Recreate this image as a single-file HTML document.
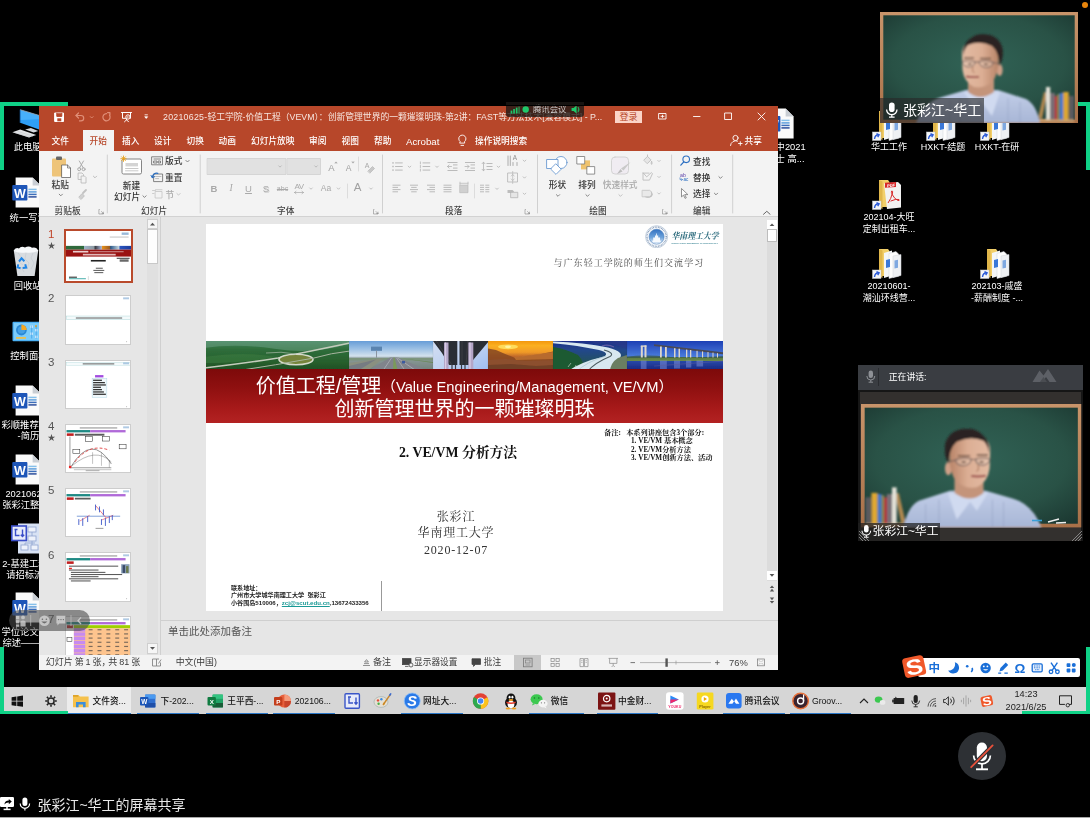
<!DOCTYPE html>
<html lang="zh-CN">
<head>
<meta charset="utf-8">
<title>腾讯会议 - 屏幕共享</title>
<style>
*{box-sizing:border-box;margin:0;padding:0}
html,body{width:1090px;height:818px;overflow:hidden;background:#000}
body{position:relative;font-family:"Liberation Sans","Noto Sans CJK SC",sans-serif;color:#fff;font-size:10px;line-height:1}
.a{position:absolute}
.g{position:absolute;background:#0fd186}
.blur{filter:blur(.45px)}
/* desktop icon labels */
.dl{position:absolute;color:#fff;font-size:9.5px;line-height:12px;white-space:nowrap;text-shadow:0 0 2px #000,1px 1px 1px #000}
.dlc{text-align:center;width:80px}
/* ppt */
#ppt{position:absolute;left:39px;top:105px;width:739px;height:565px;background:#e6e6e6;overflow:hidden}
#tb{position:absolute;left:0;top:0;width:739px;height:46px;background:#b7472a}
#rib{position:absolute;left:0;top:46px;width:739px;height:66px;background:#f3f3f3;border-bottom:1px solid #d2d2d2;color:#333}
.tab{position:absolute;top:29px;color:#fff;font-size:9.5px;white-space:nowrap;font-weight:500}
.rl{position:absolute;font-size:9px;color:#444;white-space:nowrap;font-weight:500}
.rg{position:absolute;top:101px;font-size:9px;color:#444;white-space:nowrap;transform:translateX(-50%)}
.sep{position:absolute;top:50px;width:1px;height:56px;background:#d5d5d5}
#thumbs{position:absolute;left:0;top:112px;width:121px;height:438px;background:#e6e6e6}
.th{position:absolute;left:27px;width:66px;height:50px;background:#fff;border:1px solid #cfcfcf;overflow:hidden}
.tn{position:absolute;left:9px;font-size:11px;color:#555}
#edit{position:absolute;left:122px;top:112px;width:617px;height:403px;background:#e6e6e6}
#slide{position:absolute;left:167px;top:119px;width:517px;height:387px;background:#fff;overflow:hidden;color:#000}
#notes{position:absolute;left:122px;top:515px;width:617px;height:35px;background:#e6e6e6;border-top:1px solid #cfcfcf}
#status{position:absolute;left:0;top:550px;width:739px;height:15px;background:#f3f3f3;color:#444;font-size:9.5px}
.st{position:absolute;top:2px;white-space:nowrap}
/* taskbar */
#task{position:absolute;left:0;top:687px;width:1090px;height:27px;background:#d6d6d6;color:#111}
.tk{position:absolute;top:0;height:27px}
.tkl{position:absolute;top:9.6px;font-size:8.7px;color:#111;white-space:nowrap;font-weight:500}
.ul{position:absolute;top:25.5px;height:1.5px;background:#2a76c6}
</style>
</head>
<body>

<!-- green share frame corners -->
<div class="g" style="left:0;top:102px;width:68px;height:4px"></div>
<div class="g" style="left:0;top:102px;width:3.7px;height:68px"></div>
<div class="g" style="left:1022px;top:102px;width:68px;height:4px"></div>
<div class="g" style="left:1086.3px;top:102px;width:3.7px;height:68px"></div>

<svg class="a blur" style="left:10px;top:107px" width="32" height="32" viewBox="0 0 32 32"><path d="M10.200 2.700 L32 9.300 V23.600 L10.200 15.800z" fill="#2e9ff6"/><path d="M10.200 2.700 L32 9.300 V12 L10.200 13z" fill="#5cbcff" opacity=".55"/><path d="M10.200 2.700 L32 9.300" stroke="#9aa4ae" stroke-width=".8"/><path d="M10.200 2.700 V15.800" stroke="#1a70c4" stroke-width=".8"/><path d="M15.200 22.600 L20.900 20.900 L28.300 23.900 L23.600 25.600z" fill="#d4d8dc"/><path d="M2.400 25.300 L10.200 22.600 L26.300 28 L18.900 30.600z" fill="#e2e4e6"/><path d="M4.800 25.500 L20 30 M7.600 24.400 L22.600 29" stroke="#c2c6ca" stroke-width=".6"/></svg>
<div class="dl blur" style="left:13.7px;top:142.3px;font-size:9.3px;line-height:11.500px">此电脑</div>
<svg class="a blur" style="left:11.5px;top:177px" width="30" height="31" viewBox="0 0 30 31"><path d="M3.6 0.4 h17 l8 8 v22 h-25z" fill="#fafafa"/><path d="M20.6 0.4 v8 h8z" fill="#c9ced4"/><path d="M16.4 12.400 h8.200" stroke="#86c0ea" stroke-width="1.500"/><path d="M16.400 14.900 h8.200" stroke="#5e9edc" stroke-width="1.500"/><path d="M16.400 17.400 h8.200" stroke="#3c6eba" stroke-width="1.500"/><path d="M16.400 19.900 h8.200" stroke="#2c4e9c" stroke-width="1.500"/><rect x="0.300" y="8.100" width="15.100" height="15.500" rx=".8" fill="#1e56b8"/><text x="7.900" y="20.600" font-family="Liberation Sans" font-weight="700" font-size="12.500" fill="#fff" text-anchor="middle">W</text></svg>
<div class="dl blur" style="left:9.6px;top:212.60000000000002px;font-size:9.3px;line-height:11.500px">统一写法</div>
<svg class="a blur" style="left:12px;top:245px" width="28" height="33" viewBox="0 0 28 33"><path d="M1.800 5.500 L26.200 5.500 L22.600 31 H5.400z" fill="#e4e8ec" opacity=".95"/><path d="M1.600 6 Q3 2 7 3.400 Q9 0.600 13 2.400 Q17 0.400 20 2.800 Q24.500 1.600 26.400 6 Q20 8.500 14 7.400 Q7 8.600 1.600 6z" fill="#f6f8fa"/><path d="M6 8 l3 4 l-2 5 l4 3 M14 8 l-1 6 l4 4 l-2 6 M21 8 l-2 5 l3 5 l-3 6 M9 22 l3 5" stroke="#c8ced6" stroke-width=".8" fill="none"/><g stroke="#1f86e8" stroke-width="2" fill="none"><path d="M7 16.500 l2.600 -3.200 l2.800 3"/><path d="M13.200 19.200 l1 3.400 l-3.600 .4"/><path d="M6.200 19.400 l-.6 3 l3 .8"/></g></svg>
<div class="dl blur" style="left:13.7px;top:281.1px;font-size:9.3px;line-height:11.500px">回收站</div>
<svg class="a blur" style="left:12px;top:321px" width="30" height="22" viewBox="0 0 30 22"><rect x="0.500" y="0.800" width="29" height="19.500" rx="1" fill="#4ab0f4"/><rect x="1.800" y="2" width="26.500" height="17" fill="#7cccfa"/><circle cx="9.400" cy="9" r="5.400" fill="#2a88d4"/><circle cx="9.400" cy="9" r="3.600" fill="#58b0ec" opacity=".6"/><path d="M9.400 9 V3.600 A5.400 5.400 0 0 1 14.800 9z" fill="#f6a820"/><rect x="4" y="16" width="10" height="1.800" fill="#e8c050"/><g fill="#eaf6ff"><rect x="18.500" y="4.500" width="2.400" height="2.400"/><rect x="23" y="8" width="2.400" height="2.400"/><rect x="18.500" y="11.500" width="2.400" height="2.400"/><rect x="23" y="14.600" width="2.400" height="2.400"/></g><rect x="23" y="4.200" width="2" height="2" fill="#f6a820"/><path d="M19.700 4.500 v13 M24.200 4.500 v13" stroke="#3a98e4" stroke-width=".7"/></svg>
<div class="dl blur" style="left:10.3px;top:350.7px;font-size:9.3px;line-height:11.500px">控制面板</div>
<svg class="a blur" style="left:11.5px;top:384.6px" width="30" height="31" viewBox="0 0 30 31"><path d="M3.6 0.4 h17 l8 8 v22 h-25z" fill="#fafafa"/><path d="M20.6 0.4 v8 h8z" fill="#c9ced4"/><path d="M16.4 12.400 h8.200" stroke="#86c0ea" stroke-width="1.500"/><path d="M16.400 14.900 h8.200" stroke="#5e9edc" stroke-width="1.500"/><path d="M16.400 17.400 h8.200" stroke="#3c6eba" stroke-width="1.500"/><path d="M16.400 19.900 h8.200" stroke="#2c4e9c" stroke-width="1.500"/><rect x="0.300" y="8.100" width="15.100" height="15.500" rx=".8" fill="#1e56b8"/><text x="7.900" y="20.600" font-family="Liberation Sans" font-weight="700" font-size="12.500" fill="#fff" text-anchor="middle">W</text></svg>
<div class="dl blur" style="left:1.5px;top:419.8px;font-size:9.3px;line-height:11.500px">彩顺推荐学</div>
<div class="dl blur" style="left:17.6px;top:431.0px;font-size:9.3px;line-height:11.500px">-简历</div>
<svg class="a blur" style="left:11.5px;top:454px" width="30" height="31" viewBox="0 0 30 31"><path d="M3.6 0.4 h17 l8 8 v22 h-25z" fill="#fafafa"/><path d="M20.6 0.4 v8 h8z" fill="#c9ced4"/><path d="M16.4 12.400 h8.200" stroke="#86c0ea" stroke-width="1.500"/><path d="M16.400 14.900 h8.200" stroke="#5e9edc" stroke-width="1.500"/><path d="M16.400 17.400 h8.200" stroke="#3c6eba" stroke-width="1.500"/><path d="M16.400 19.900 h8.200" stroke="#2c4e9c" stroke-width="1.500"/><rect x="0.300" y="8.100" width="15.100" height="15.500" rx=".8" fill="#1e56b8"/><text x="7.900" y="20.600" font-family="Liberation Sans" font-weight="700" font-size="12.500" fill="#fff" text-anchor="middle">W</text></svg>
<div class="dl blur" style="left:5.4px;top:488.7px;font-size:9.3px;line-height:11.500px">2021062</div>
<div class="dl blur" style="left:2.2px;top:499.9px;font-size:9.3px;line-height:11.500px">张彩江整理</div>
<svg class="a blur" style="left:11px;top:523px" width="30" height="32" viewBox="0 0 30 32"><rect x="7" y="0.500" width="22" height="30" fill="#d8e2f4"/><g stroke="#8fa4d0" stroke-width=".8" fill="#eef2fb"><rect x="17" y="4" width="8" height="5"/><rect x="17" y="13" width="8" height="5"/><rect x="10" y="22" width="7" height="5"/><rect x="20" y="22" width="7" height="5"/><path d="M21 9 v4 M21 18 v4 M14 22 v-2 h10" fill="none"/></g><rect x="0.800" y="3" width="14.500" height="14.500" fill="#e8ecfb" stroke="#3a4ec8" stroke-width="1.600"/><path d="M4.500 6.500 v6 h4 M11.500 6.500 v7 M9.800 11.800 l1.700 1.800 l1.700 -1.800 M3.500 6.500 h3" stroke="#3a4ec8" stroke-width="1.400" fill="none"/></svg>
<div class="dl blur" style="left:2.2px;top:558.9px;font-size:9.3px;line-height:11.500px">2-基建工程</div>
<div class="dl blur" style="left:6.2px;top:570.1px;font-size:9.3px;line-height:11.500px">请招标流</div>
<svg class="a blur" style="left:11.5px;top:592.4px" width="30" height="31" viewBox="0 0 30 31"><path d="M3.6 0.4 h17 l8 8 v22 h-25z" fill="#fafafa"/><path d="M20.6 0.4 v8 h8z" fill="#c9ced4"/><path d="M16.4 12.400 h8.200" stroke="#86c0ea" stroke-width="1.500"/><path d="M16.400 14.900 h8.200" stroke="#5e9edc" stroke-width="1.500"/><path d="M16.400 17.400 h8.200" stroke="#3c6eba" stroke-width="1.500"/><path d="M16.400 19.900 h8.200" stroke="#2c4e9c" stroke-width="1.500"/><rect x="0.300" y="8.100" width="15.100" height="15.500" rx=".8" fill="#1e56b8"/><text x="7.900" y="20.600" font-family="Liberation Sans" font-weight="700" font-size="12.500" fill="#fff" text-anchor="middle">W</text></svg>
<div class="dl blur" style="left:1.5px;top:627.0px;font-size:9.3px;line-height:11.500px">学位论文文</div>
<div class="dl blur" style="left:2.4px;top:638.2px;font-size:9.3px;line-height:11.500px">综述——</div>

<svg class="a blur" style="left:764.7px;top:107.5px" width="30" height="31" viewBox="0 0 30 31"><path d="M3.6 0.4 h17 l8 8 v22 h-25z" fill="#fafafa"/><path d="M20.6 0.4 v8 h8z" fill="#c9ced4"/><path d="M16.4 12.400 h8.200" stroke="#86c0ea" stroke-width="1.500"/><path d="M16.400 14.900 h8.200" stroke="#5e9edc" stroke-width="1.500"/><path d="M16.400 17.400 h8.200" stroke="#3c6eba" stroke-width="1.500"/><path d="M16.400 19.900 h8.200" stroke="#2c4e9c" stroke-width="1.500"/><rect x="0.300" y="8.100" width="15.100" height="15.500" rx=".8" fill="#1e56b8"/><text x="7.900" y="20.600" font-family="Liberation Sans" font-weight="700" font-size="12.500" fill="#fff" text-anchor="middle">W</text></svg>
<div class="dl blur" style="left:775.6px;top:141.9px;font-size:9.3px;line-height:11.500px">中2021</div>
<div class="dl blur" style="left:775.6px;top:154.20000000000002px;font-size:9.3px;line-height:11.500px">士 高...</div>
<svg class="a blur" style="left:872px;top:110px" width="30" height="32" viewBox="0 0 30 32"><path d="M7 1 h9 l1.500 2 v25 h-10.500z" fill="#f2cf6a"/><path d="M7 1 l3.500 1.500 v27.500 l-3.500 -2z" fill="#e0b64a"/><path d="M12 5 l8 -2.500 v25 l-8 2.500z" fill="#f4f6f8"/><path d="M17 5.500 l7 -2 l3 3 v21.500 l-10 2.500z" fill="#fdfdfd" stroke="#d0d4d8" stroke-width=".5"/><path d="M21 8 l8 -1.500 v21 l-8 2z" fill="#eef0f3" stroke="#d0d4d8" stroke-width=".5"/><path d="M14 12 l4 -1 v8 l-4 1z" fill="#3a78d8"/><path d="M22.500 12.500 l3.500 -.8 v8 l-3.500 .8z" fill="#7fa8e0"/><rect x="0.500" y="22" width="8.500" height="8.500" fill="#f4f6f8" stroke="#c8ccd0" stroke-width=".5"/><path d="M2.500 29 q.5 -4 4 -4.200 M4.500 23.600 l2.600 1.200 l-1.400 2.400" stroke="#2a5ad8" stroke-width="1.400" fill="none"/></svg>
<div class="dl dlc blur" style="left:844.0px;top:142.3px;width:90px;font-size:9px;line-height:11.500px">华工工作</div>
<svg class="a blur" style="left:926px;top:110px" width="30" height="32" viewBox="0 0 30 32"><path d="M7 1 h9 l1.500 2 v25 h-10.500z" fill="#f2cf6a"/><path d="M7 1 l3.500 1.500 v27.500 l-3.500 -2z" fill="#e0b64a"/><path d="M12 5 l8 -2.500 v25 l-8 2.500z" fill="#f4f6f8"/><path d="M17 5.500 l7 -2 l3 3 v21.500 l-10 2.500z" fill="#fdfdfd" stroke="#d0d4d8" stroke-width=".5"/><path d="M21 8 l8 -1.500 v21 l-8 2z" fill="#eef0f3" stroke="#d0d4d8" stroke-width=".5"/><path d="M14 12 l4 -1 v8 l-4 1z" fill="#3a78d8"/><path d="M22.500 12.500 l3.500 -.8 v8 l-3.500 .8z" fill="#7fa8e0"/><rect x="0.500" y="22" width="8.500" height="8.500" fill="#f4f6f8" stroke="#c8ccd0" stroke-width=".5"/><path d="M2.500 29 q.5 -4 4 -4.200 M4.500 23.600 l2.600 1.200 l-1.400 2.400" stroke="#2a5ad8" stroke-width="1.400" fill="none"/></svg>
<div class="dl dlc blur" style="left:898.0px;top:142.3px;width:90px;font-size:9px;line-height:11.500px">HXKT-结题</div>
<svg class="a blur" style="left:980px;top:110px" width="30" height="32" viewBox="0 0 30 32"><path d="M7 1 h9 l1.500 2 v25 h-10.500z" fill="#f2cf6a"/><path d="M7 1 l3.500 1.500 v27.500 l-3.500 -2z" fill="#e0b64a"/><path d="M12 5 l8 -2.500 v25 l-8 2.500z" fill="#f4f6f8"/><path d="M17 5.500 l7 -2 l3 3 v21.500 l-10 2.500z" fill="#fdfdfd" stroke="#d0d4d8" stroke-width=".5"/><path d="M21 8 l8 -1.500 v21 l-8 2z" fill="#eef0f3" stroke="#d0d4d8" stroke-width=".5"/><path d="M14 12 l4 -1 v8 l-4 1z" fill="#3a78d8"/><path d="M22.500 12.500 l3.500 -.8 v8 l-3.500 .8z" fill="#7fa8e0"/><rect x="0.500" y="22" width="8.500" height="8.500" fill="#f4f6f8" stroke="#c8ccd0" stroke-width=".5"/><path d="M2.500 29 q.5 -4 4 -4.200 M4.500 23.600 l2.600 1.200 l-1.400 2.400" stroke="#2a5ad8" stroke-width="1.400" fill="none"/></svg>
<div class="dl dlc blur" style="left:952.0px;top:142.3px;width:90px;font-size:9px;line-height:11.500px">HXKT-在研</div>
<svg class="a blur" style="left:872px;top:178.5px" width="30" height="32" viewBox="0 0 30 32"><path d="M7 1 h9 l1.500 2 v25 h-10.500z" fill="#f2cf6a"/><path d="M7 1 l3.500 1.500 v27.500 l-3.500 -2z" fill="#e0b64a"/><path d="M12 4.500 l14 -1.500 l3 3 v22.500 l-14 1.500z" fill="#f2f2f2"/><rect x="13" y="5" width="11" height="5" fill="#d8282a" transform="skewY(-5)"/><text x="15" y="9.500" font-family="Liberation Sans" font-weight="700" font-size="4" fill="#fff" transform="skewY(-5)">PDF</text><path d="M16 24 q3 -4 4.500 -10 q.6 -2.400 -.8 -2 q-1 .8 .8 4 q2 4 5.500 5.500 q1.800 .3 1 -1 q-2.400 -1 -8.500 1.600" stroke="#d8282a" stroke-width="1" fill="none"/><rect x="0.500" y="22" width="8.500" height="8.500" fill="#f4f6f8" stroke="#c8ccd0" stroke-width=".5"/><path d="M2.500 29 q.5 -4 4 -4.200 M4.500 23.600 l2.600 1.200 l-1.400 2.400" stroke="#2a5ad8" stroke-width="1.400" fill="none"/></svg>
<div class="dl dlc blur" style="left:844.0px;top:212.3px;width:90px;font-size:9px;line-height:11.500px">202104-大旺<br>定制出租车...</div>
<svg class="a blur" style="left:872px;top:247.5px" width="30" height="32" viewBox="0 0 30 32"><path d="M7 1 h9 l1.500 2 v25 h-10.500z" fill="#f2cf6a"/><path d="M7 1 l3.500 1.500 v27.500 l-3.500 -2z" fill="#e0b64a"/><path d="M12 5 l8 -2.500 v25 l-8 2.500z" fill="#f4f6f8"/><path d="M17 5.500 l7 -2 l3 3 v21.500 l-10 2.500z" fill="#fdfdfd" stroke="#d0d4d8" stroke-width=".5"/><path d="M21 8 l8 -1.500 v21 l-8 2z" fill="#eef0f3" stroke="#d0d4d8" stroke-width=".5"/><path d="M14 12 l4 -1 v8 l-4 1z" fill="#3a78d8"/><path d="M22.500 12.500 l3.500 -.8 v8 l-3.500 .8z" fill="#7fa8e0"/><rect x="0.500" y="22" width="8.500" height="8.500" fill="#f4f6f8" stroke="#c8ccd0" stroke-width=".5"/><path d="M2.500 29 q.5 -4 4 -4.200 M4.500 23.600 l2.600 1.200 l-1.400 2.400" stroke="#2a5ad8" stroke-width="1.400" fill="none"/></svg>
<div class="dl dlc blur" style="left:844.0px;top:281.2px;width:90px;font-size:9px;line-height:11.500px">20210601-<br>潮汕环线营...</div>
<svg class="a blur" style="left:980px;top:247.5px" width="30" height="32" viewBox="0 0 30 32"><path d="M7 1 h9 l1.500 2 v25 h-10.500z" fill="#f2cf6a"/><path d="M7 1 l3.500 1.500 v27.500 l-3.500 -2z" fill="#e0b64a"/><path d="M12 5 l8 -2.500 v25 l-8 2.500z" fill="#f4f6f8"/><path d="M17 5.500 l7 -2 l3 3 v21.500 l-10 2.500z" fill="#fdfdfd" stroke="#d0d4d8" stroke-width=".5"/><path d="M21 8 l8 -1.500 v21 l-8 2z" fill="#eef0f3" stroke="#d0d4d8" stroke-width=".5"/><path d="M14 12 l4 -1 v8 l-4 1z" fill="#3a78d8"/><path d="M22.500 12.500 l3.500 -.8 v8 l-3.500 .8z" fill="#7fa8e0"/><rect x="0.500" y="22" width="8.500" height="8.500" fill="#f4f6f8" stroke="#c8ccd0" stroke-width=".5"/><path d="M2.500 29 q.5 -4 4 -4.200 M4.500 23.600 l2.600 1.200 l-1.400 2.400" stroke="#2a5ad8" stroke-width="1.400" fill="none"/></svg>
<div class="dl dlc blur" style="left:952.0px;top:281.2px;width:90px;font-size:9px;line-height:11.500px">202103-戚盛<br>-薪酬制度 -...</div>


<!-- PowerPoint window -->
<div id="ppt">
  <div id="tb"></div>
  <div id="rib"></div>
  <div class="a" style="left:0;top:0;width:739px;height:113px">
<div class="a blur" style="left:124px;top:7.4px;font-size:8.8px;line-height:11px;color:#f7e6e0;white-space:nowrap;width:440px;overflow:hidden"><span style="letter-spacing:.26px">20210625-</span>轻工学院-价值工程（VEVM）：创新管理世界的一颗璀璨明珠-第2讲：FAST等方法技术[兼容模式] - P...</div>
<div class="a" style="left:576px;top:5.5px;width:27px;height:12.5px;background:#fbd5c8;color:#b7472a;font-size:9px;line-height:12.5px;text-align:center">登录</div>
<div class="a" style="left:43.5px;top:25px;width:31px;height:21px;background:#f3f3f3"></div>
<div class="tab blur" style="left:12.6px;top:30.5px;color:#fff;font-size:8.7px;line-height:11px">文件</div>
<div class="tab blur" style="left:50.5px;top:30.5px;color:#b7472a;font-size:8.7px;line-height:11px">开始</div>
<div class="tab blur" style="left:83px;top:30.5px;color:#fff;font-size:8.7px;line-height:11px">插入</div>
<div class="tab blur" style="left:115px;top:30.5px;color:#fff;font-size:8.7px;line-height:11px">设计</div>
<div class="tab blur" style="left:147.5px;top:30.5px;color:#fff;font-size:8.7px;line-height:11px">切换</div>
<div class="tab blur" style="left:179.6px;top:30.5px;color:#fff;font-size:8.7px;line-height:11px">动画</div>
<div class="tab blur" style="left:212px;top:30.5px;color:#fff;font-size:8.7px;line-height:11px">幻灯片放映</div>
<div class="tab blur" style="left:270px;top:30.5px;color:#fff;font-size:8.7px;line-height:11px">审阅</div>
<div class="tab blur" style="left:302.5px;top:30.5px;color:#fff;font-size:8.7px;line-height:11px">视图</div>
<div class="tab blur" style="left:335px;top:30.5px;color:#fff;font-size:8.7px;line-height:11px">帮助</div>
<div class="tab blur" style="left:367px;top:30.5px;color:#fff;font-size:9.7px;line-height:11px">Acrobat</div>
<div class="tab blur" style="left:436px;top:30.5px;color:#fff;font-size:8.7px;line-height:11px">操作说明搜索</div>
<div class="tab blur" style="left:705.6px;top:30.5px;color:#fff;font-size:8.7px;line-height:11px">共享</div>
<div class="rl blur" style="left:12.6px;top:75.0px;color:#333;font-size:8.7px;line-height:11px;">粘贴</div>
<div class="rl blur" style="left:83.7px;top:76.1px;color:#333;font-size:8.7px;line-height:11px;">新建</div>
<div class="rl blur" style="left:75px;top:86.89999999999999px;color:#333;font-size:8.7px;line-height:11px;">幻灯片</div>
<div class="rl blur" style="left:126px;top:51.4px;color:#333;font-size:8.7px;line-height:11px;">版式</div>
<div class="rl blur" style="left:126px;top:68.1px;color:#333;font-size:8.7px;line-height:11px;">重置</div>
<div class="rl blur" style="left:126.5px;top:84.6px;color:#aaa;font-size:8.7px;line-height:11px;">节</div>
<div class="rl blur" style="left:15.6px;top:101.39999999999999px;color:#444;font-size:8.7px;line-height:11px;">剪贴板</div>
<div class="rl blur" style="left:102px;top:101.39999999999999px;color:#444;font-size:8.7px;line-height:11px;">幻灯片</div>
<div class="rl blur" style="left:238px;top:101.39999999999999px;color:#444;font-size:8.7px;line-height:11px;">字体</div>
<div class="rl blur" style="left:406.0px;top:101.39999999999999px;color:#444;font-size:8.7px;line-height:11px;">段落</div>
<div class="rl blur" style="left:550.3px;top:101.1px;color:#444;font-size:8.7px;line-height:11px;">绘图</div>
<div class="rl blur" style="left:654px;top:101.1px;color:#444;font-size:8.7px;line-height:11px;">编辑</div>
<div class="rl blur" style="left:509.7px;top:75.3px;color:#333;font-size:8.7px;line-height:11px;">形状</div>
<div class="rl blur" style="left:539.2px;top:75.3px;color:#333;font-size:8.7px;line-height:11px;">排列</div>
<div class="rl blur" style="left:563.8px;top:75.3px;color:#aaa;font-size:8.7px;line-height:11px;">快速样式</div>
<div class="rl blur" style="left:654px;top:51.6px;color:#333;font-size:8.7px;line-height:11px;">查找</div>
<div class="rl blur" style="left:654px;top:67.6px;color:#333;font-size:8.7px;line-height:11px;">替换</div>
<div class="rl blur" style="left:654px;top:84.0px;color:#333;font-size:8.7px;line-height:11px;">选择</div>
<div class="rl blur" style="left:165px;width:20px;text-align:center;top:77.8px;color:#a9a9a9;font-size:9.5px;line-height:11px;font-weight:700;font-style:normal;">B</div>
<div class="rl blur" style="left:182px;width:20px;text-align:center;top:77.8px;color:#a9a9a9;font-size:9.5px;line-height:11px;font-weight:400;font-style:italic;font-family:'Liberation Serif',serif;">I</div>
<div class="rl blur" style="left:199.5px;width:20px;text-align:center;top:77.8px;color:#a9a9a9;font-size:9.5px;line-height:11px;font-weight:400;font-style:normal;text-decoration:underline;">U</div>
<div class="rl blur" style="left:217px;width:20px;text-align:center;top:77.8px;color:#a9a9a9;font-size:9.5px;line-height:11px;font-weight:400;font-style:normal;text-shadow:.6px .6px 0 #ccc;">S</div>
<div class="rl blur" style="left:233.5px;width:20px;text-align:center;top:77.8px;color:#a9a9a9;font-size:9.5px;line-height:11px;font-weight:400;font-style:normal;text-decoration:line-through;font-size:7px;">abc</div>
<div class="rl blur" style="left:277px;width:20px;text-align:center;top:77.8px;color:#a9a9a9;font-size:9.5px;line-height:11px;font-weight:400;font-style:normal;font-size:8.5px;">Aa</div>
<div class="rl blur" style="left:250px;width:20px;text-align:center;top:76.0px;color:#a9a9a9;font-size:8px;line-height:11px;letter-spacing:-.5px">AV</div>
<div class="rl blur" style="left:308.5px;width:20px;text-align:center;top:75.5px;color:#a0a0a0;font-size:11.5px;line-height:12px">A</div>
<div class="rl blur" style="left:282.5px;width:20px;text-align:center;top:57.0px;color:#a0a0a0;font-size:9.5px;line-height:11px">A</div>
<div class="rl blur" style="left:299.5px;width:20px;text-align:center;top:57.5px;color:#a0a0a0;font-size:8.5px;line-height:11px">A</div>
<svg class="a blur" style="left:0;top:0" width="739" height="113" viewBox="0 0 739 113" fill="none" stroke-linecap="round" stroke-linejoin="round">
<g stroke="#fff" stroke-width="1"><path d="M16 8 h8.5 v8.5 h-8.5z" fill="#fff"/><path d="M17.8 8.2 v3.2 h5 v-3.2" stroke="#b7472a" fill="#b7472a"/><rect x="18.3" y="13.3" width="4" height="3" fill="#b7472a" stroke="none"/></g>
<g stroke="#e08f78" stroke-width="1.2"><path d="M37 10.5 h5 a2.7 2.7 0 0 1 0 5.4 h-1.5"/><path d="M39.5 8 L37 10.5 L39.5 13"/></g>
<path d="M51.3 11.6 l1.4 1.4 l1.4 -1.4" stroke="#e08f78" stroke-width=".9"/>
<g stroke="#e08f78" stroke-width="1.2"><path d="M70.5 10.2 a3.6 3.6 0 1 1 -3 -1.6"/><path d="M68.6 7.6 h2.3 v2.3"/></g>
<g stroke="#fff" stroke-width="1"><path d="M82.5 7.5 h10"/><path d="M83.5 7.5 v5.8 h8 v-5.8"/><path d="M87.5 13.3 v1.5 M85.5 16.8 l2 -2 l2 2"/><circle cx="89" cy="12" r="2.2" fill="#b7472a"/><path d="M88.4 11 l1.6 1 l-1.6 1z" fill="#fff" stroke="none"/></g>
<path d="M106 9.8 h2.4 M106 12 l1.2 1.4 l1.2 -1.4z" stroke="#fff" stroke-width=".8" fill="#fff"/>
<g stroke="#fff" stroke-width=".9"><rect x="620" y="8.5" width="7" height="5.5"/><path d="M622 11.3 h3 M623.5 10.2 v2.2" /><path d="M654.5 11.5 h6.5"/><rect x="686" y="8" width="6.5" height="6.5"/><path d="M719 8 l7 7 M726 8 l-7 7"/></g>
<g stroke="#fff" stroke-width=".9"><path d="M421 36.5 a3.6 3.6 0 1 1 4.6 0 v1.6 h-4.6z"/><path d="M422 40.4 h2.6"/></g>
<g stroke="#fff" stroke-width=".9"><circle cx="696.5" cy="33" r="2.6"/><path d="M691.5 40.5 a5 5 0 0 1 7 -4.4"/><path d="M699.5 38.5 h3.6 M701.3 36.7 v3.6"/></g>
<path d="M68.3 50 V108" stroke="#d0d0d0" stroke-width="1"/>
<path d="M161.2 50 V108" stroke="#d0d0d0" stroke-width="1"/>
<path d="M343.5 50 V108" stroke="#d0d0d0" stroke-width="1"/>
<path d="M498.5 50 V108" stroke="#d0d0d0" stroke-width="1"/>
<path d="M632.6 50 V108" stroke="#d0d0d0" stroke-width="1"/>
<path d="M693.7 50 V108" stroke="#d0d0d0" stroke-width="1"/>
<path d="M60.4 104.5 h-0.5 v4.5 h4.5 v-0.5 M62.4 106.5 l2 2 M64.4 107.1 v1.4 h-1.4" stroke="#8a8a8a" stroke-width=".6"/>
<path d="M335 104.5 h-0.5 v4.5 h4.5 v-0.5 M337 106.5 l2 2 M339 107.1 v1.4 h-1.4" stroke="#8a8a8a" stroke-width=".6"/>
<path d="M486.5 104.5 h-0.5 v4.5 h4.5 v-0.5 M488.5 106.5 l2 2 M490.5 107.1 v1.4 h-1.4" stroke="#8a8a8a" stroke-width=".6"/>
<path d="M624 104.5 h-0.5 v4.5 h4.5 v-0.5 M626 106.5 l2 2 M628 107.1 v1.4 h-1.4" stroke="#8a8a8a" stroke-width=".6"/>
<path d="M724.5 109.3 l3.3 -3 l3.3 3" stroke="#555" stroke-width=".9"/>
<g><rect x="13" y="53.5" width="14" height="18" rx="1" fill="#eec479"/><rect x="17" y="51.6" width="6" height="3.4" rx="1" fill="#666"/><path d="M23 60 h5.5 l3 3 v9.5 h-8.5z" fill="#fff" stroke="#666" stroke-width=".8"/><path d="M28.5 60 v3 h3" stroke="#666" stroke-width=".7"/></g>
<path d="M20.2 89.2 L21.8 90.8 L23.400000000000002 89.2" stroke="#777" stroke-width="0.9"/>
<g stroke="#a5a5a5" stroke-width=".9"><path d="M40.3 56 l4 7 M44.5 56 l-4 7"/><circle cx="40.2" cy="64.2" r="1.5"/><circle cx="44.6" cy="64.2" r="1.5"/></g>
<g stroke="#b5b5b5" stroke-width=".8"><path d="M39.5 68 h3.5 l1.5 1.5 v5 h-5z"/><path d="M42.5 71 h3 l1.5 1.5 v5.5 h-4.5z" fill="#f3f3f3"/></g>
<path d="M54.4 71.2 L56 72.8 L57.6 71.2" stroke="#b5b5b5" stroke-width="0.9"/>
<g stroke="#c2c2c2" stroke-width="1"><path d="M40 92 l3 -3.4 l2.4 2.2 l-3 3.4z" fill="#d0d0d0"/><path d="M44 88 l3 -3" stroke-width="1.8"/></g>
<g><rect x="83" y="54" width="19.5" height="15" rx="1.5" fill="#fff" stroke="#777" stroke-width=".9"/><rect x="86.5" y="58" width="12.5" height="3.4" fill="#d4d4d4"/><path d="M86.5 63.5 h12.5 M86.5 65.8 h12.5" stroke="#bbb" stroke-width=".8"/><g stroke="#e8a11c" stroke-width=".9"><path d="M84.5 51 v5.4 M81.8 53.7 h5.4 M82.6 51.8 l3.8 3.8 M86.4 51.8 l-3.8 3.8"/></g></g>
<path d="M103.9 90.8 L105.5 92.39999999999999 L107.1 90.8" stroke="#777" stroke-width="0.9"/>
<g stroke="#666" stroke-width=".8"><rect x="113" y="51.8" width="10.5" height="8"/><path d="M115 54 h6.5 M115 56 h3 v2 h-3z M119.5 56 h2 v2 h-2z"/></g>
<path d="M146.9 55.400000000000006 L148.5 57.0 L150.1 55.400000000000006" stroke="#777" stroke-width="0.9"/>
<g stroke="#666" stroke-width=".8"><rect x="115" y="69" width="8.600" height="7.600" fill="#f3f3f3"/><path d="M116.600 71.500 h5.400 M116.600 73.600 h3" stroke="#999" stroke-width=".6"/></g><path d="M113.400 72.400 a4.200 4.200 0 0 1 5.400 -4" stroke="#2b6fc2" stroke-width="1.300" fill="none"/><path d="M112 70.400 l1.300 2.400 l2.400 -1.200" stroke="#2b6fc2" stroke-width="1" fill="none"/>
<g stroke="#c4c4c4" stroke-width=".8"><path d="M113.5 85.5 h3 M113.5 88.5 h1.5"/><rect x="116.5" y="86.5" width="6.5" height="6.5"/><path d="M116.5 84.7 h6.5"/></g>
<path d="M137.9 88.5 L139.5 90.1 L141.1 88.5" stroke="#c0c0c0" stroke-width="0.9"/>
<rect x="168.5" y="53.5" width="78.5" height="16" fill="#e1e1e1" stroke="#cfcfcf" stroke-width=".8"/>
<rect x="248.5" y="53.5" width="33" height="16" fill="#e1e1e1" stroke="#cfcfcf" stroke-width=".8"/>
<path d="M239.7 60.85 L241 62.15 L242.3 60.85" stroke="#b0b0b0" stroke-width="0.8"/>
<path d="M275.7 60.85 L277 62.15 L278.3 60.85" stroke="#b0b0b0" stroke-width="0.8"/>
<path d="M296 58 l1 -1.2 l1 1.2z M313 57 l1 1.2 l1 -1.2z" fill="#a0a0a0" stroke="#a0a0a0" stroke-width=".4"/>
<path d="M319.5 52 v14" stroke="#d6d6d6" stroke-width=".8"/>
<text x="328" y="62.5" font-family="Liberation Sans" font-size="7" fill="#a8a8a8" text-anchor="middle">A</text><g stroke="#b0b0b0"><path d="M329 66 l4.5 -4.5 l2 2 l-4.5 4.5z" fill="#c8c8c8" stroke-width=".6"/></g>
<path d="M255.5 87.5 h9 M257 86.3 l-1.5 1.2 l1.5 1.2 M263 86.3 l1.5 1.2 l-1.5 1.2" stroke="#a9a9a9" stroke-width=".7"/>
<path d="M270.7 82.94999999999999 L272 84.25 L273.3 82.94999999999999" stroke="#b5b5b5" stroke-width="0.8"/>
<path d="M298.2 82.94999999999999 L299.5 84.25 L300.8 82.94999999999999" stroke="#b5b5b5" stroke-width="0.8"/>
<path d="M330.7 82.94999999999999 L332 84.25 L333.3 82.94999999999999" stroke="#b5b5b5" stroke-width="0.8"/>
<path d="M308.5 79 v14" stroke="#d6d6d6" stroke-width=".8"/>
<rect x="353.3" y="57.199999999999996" width="1.4" height="1.4" fill="#b4b4b4"/>
<path d="M356.1 57.9 h7.6" stroke="#b4b4b4" stroke-width=".9" stroke-linecap="butt"/>
<rect x="353.3" y="60.8" width="1.4" height="1.4" fill="#b4b4b4"/>
<path d="M356.1 61.5 h7.6" stroke="#b4b4b4" stroke-width=".9" stroke-linecap="butt"/>
<rect x="353.3" y="64.39999999999999" width="1.4" height="1.4" fill="#b4b4b4"/>
<path d="M356.1 65.1 h7.6" stroke="#b4b4b4" stroke-width=".9" stroke-linecap="butt"/>
<path d="M369.2 61.15 L370.5 62.449999999999996 L371.8 61.15" stroke="#b4b4b4" stroke-width="0.8"/>
<path d="M381.4 56.9 v2" stroke="#b4b4b4" stroke-width=".8"/>
<path d="M383.6 57.9 h7.6" stroke="#b4b4b4" stroke-width=".9" stroke-linecap="butt"/>
<path d="M381.4 60.5 v2" stroke="#b4b4b4" stroke-width=".8"/>
<path d="M383.6 61.5 h7.6" stroke="#b4b4b4" stroke-width=".9" stroke-linecap="butt"/>
<path d="M381.4 64.1 v2" stroke="#b4b4b4" stroke-width=".8"/>
<path d="M383.6 65.1 h7.6" stroke="#b4b4b4" stroke-width=".9" stroke-linecap="butt"/>
<path d="M396.7 61.15 L398 62.449999999999996 L399.3 61.15" stroke="#b4b4b4" stroke-width="0.8"/>
<path d="M408.5 57.5 h10 M408.5 65.5 h10 M414.0 59.9 h4.5 M414.0 63.1 h4.5" stroke="#b4b4b4" stroke-width=".9" stroke-linecap="butt"/>
<path d="M412.5 61.5 h-4 M410.1 59.9 l-1.6 1.6 l1.6 1.6" stroke="#b4b4b4" stroke-width=".8"/>
<path d="M426 57.5 h10 M426 65.5 h10 M431.5 59.9 h4.5 M431.5 63.1 h4.5" stroke="#b4b4b4" stroke-width=".9" stroke-linecap="butt"/>
<path d="M426 61.5 h4 M428.4 59.9 l1.6 1.6 l-1.6 1.6" stroke="#b4b4b4" stroke-width=".8"/>
<path d="M444.5 57.3 v8.4 M443.1 58.7 l1.4 -1.6 l1.4 1.6 M443.1 64.3 l1.4 1.6 l1.4 -1.6" stroke="#b4b4b4" stroke-width=".8"/><path d="M447.5 58.5 h6 M447.5 61.5 h6 M447.5 64.5 h6" stroke="#b4b4b4" stroke-width=".9" stroke-linecap="butt"/>
<path d="M458.2 61.15 L459.5 62.449999999999996 L460.8 61.15" stroke="#b4b4b4" stroke-width="0.8"/>
<path d="M469.0 51.0 v9.5 M471.3 51.0 v9.5 M474.0 60.5 v-3 M478.0 60.5 v-3" stroke="#9a9a9a" stroke-width=".8"/><text x="476.0" y="55.3" font-family="Liberation Sans" font-size="6.400" fill="#8e8e8e" text-anchor="middle">A</text>
<path d="M484.2 55.15 L485.5 56.449999999999996 L486.8 55.15" stroke="#b4b4b4" stroke-width="0.8"/>
<rect x="469.0" y="68.0" width="9.5" height="9" stroke="#b4b4b4" stroke-width=".8"/><path d="M473.7 66.5 v12 M472.3 71.0 l1.4 -1.6 l1.4 1.6 M472.3 74.0 l1.4 1.6 l1.4 -1.6" stroke="#b4b4b4" stroke-width=".7"/>
<path d="M484.2 71.85 L485.5 73.15 L486.8 71.85" stroke="#b4b4b4" stroke-width="0.8"/>
<path d="M468.5 84.9 h5 l1.6 1.6 l-1.6 1.6 h-5z" fill="#bdbdbd" stroke="none"/><rect x="472.0" y="87.3" width="6.8" height="5.4" fill="#e6e6e6" stroke="#b4b4b4" stroke-width=".8"/>
<path d="M484.2 88.14999999999999 L485.5 89.45 L486.8 88.14999999999999" stroke="#b4b4b4" stroke-width="0.8"/>
<path d="M353.5 80.2 h8 M353.5 82.4 h5.5 M353.5 84.6 h8 M353.5 86.8 h5.5 " stroke="#b4b4b4" stroke-width="0.9" stroke-linecap="butt"/>
<path d="M371.0 80.2 h8 M372.2 82.4 h5.5 M371.0 84.6 h8 M372.2 86.8 h5.5 " stroke="#b4b4b4" stroke-width="0.9" stroke-linecap="butt"/>
<path d="M388.0 80.2 h8 M390.5 82.4 h5.5 M388.0 84.6 h8 M390.5 86.8 h5.5 " stroke="#b4b4b4" stroke-width="0.9" stroke-linecap="butt"/>
<path d="M404.5 80.2 h8 M404.5 82.4 h8 M404.5 84.6 h8 M404.5 86.8 h8 " stroke="#b4b4b4" stroke-width="0.9" stroke-linecap="butt"/>
<rect x="421" y="80.1" width="8" height="7.6" fill="#d0d0d0" stroke="#b4b4b4" stroke-width=".6"/><path d="M421 78.3 h8 M421 77.1 v2.4 M429 77.1 v2.4" stroke="#b4b4b4" stroke-width=".7"/>
<path d="M435.5 79 v14" stroke="#d6d6d6" stroke-width=".8"/>
<path d="M441.0 80.2 h4 M446.3 80.2 h4 M441.0 82.4 h4 M446.3 82.4 h4 M441.0 84.6 h4 M446.3 84.6 h4 M441.0 86.8 h4 M446.3 86.8 h4" stroke="#b4b4b4" stroke-width=".9" stroke-linecap="butt"/>
<path d="M456.7 83.14999999999999 L458 84.45 L459.3 83.14999999999999" stroke="#b4b4b4" stroke-width="0.8"/>
<circle cx="522" cy="57.5" r="6" fill="#fff" stroke="#6c9bd1" stroke-width=".9"/><rect x="508" y="54.5" width="11" height="9" fill="#fff" stroke="#6c9bd1" stroke-width=".9"/><path d="M517 59 l5.2 5.2 l-5.2 5.2 l-5.2 -5.2z" fill="#fff" stroke="#6c9bd1" stroke-width=".9"/>
<path d="M517.4 89.7 L519 91.3 L520.6 89.7" stroke="#777" stroke-width="0.9"/>
<rect x="542" y="55.4" width="9" height="9" fill="#efc36e"/><rect x="538.2" y="51.5" width="7.5" height="7.5" fill="#fff" stroke="#777" stroke-width=".8"/><rect x="548.2" y="61.6" width="7.5" height="7.5" fill="#fff" stroke="#777" stroke-width=".8"/>
<path d="M546.9 89.7 L548.5 91.3 L550.1 89.7" stroke="#777" stroke-width="0.9"/>
<rect x="572.5" y="52" width="17" height="17" rx="3.5" fill="#f0ecf2" stroke="#cfcfcf" stroke-width=".9"/><path d="M591.5 57 l-7 8.5 l-2.5 -2z" fill="#c9c9c9" stroke="none"/><path d="M581.5 64 l-3.5 5 l5.5 -2.6z" fill="#bdbdbd" stroke="none"/>
<path d="M579.9 89.7 L581.5 91.3 L583.1 89.7" stroke="#bbb" stroke-width="0.9"/>
<path d="M605 54.9 l3.5 -3.5 l3.5 3.5 l-3.5 3.5z M608.5 51.4 v-1.5 M612.6 56.4 q1.2 2 0 3 q-1.2 -1 0 -3" stroke="#bdbdbd" stroke-width=".9" fill="#e6e6e6"/>
<path d="M618.7 55.35 L620 56.65 L621.3 55.35" stroke="#bbb" stroke-width="0.8"/>
<path d="M604 68.1 h6 M604 68.1 v7 h6.5 l3 -6.5 l-1.2 -1 l-4.3 4z" stroke="#bdbdbd" stroke-width=".9"/>
<path d="M618.7 71.35 L620 72.65 L621.3 71.35" stroke="#bbb" stroke-width="0.8"/>
<ellipse cx="609" cy="89.3" rx="4.6" ry="3.4" fill="#b8b8b8"/><path d="M603.5 85.3 h7 l2 1.5 v3.5 l-2 1.5 h-7z" fill="#e9e9e9" stroke="#c2c2c2" stroke-width=".8"/>
<path d="M618.7 87.85 L620 89.15 L621.3 87.85" stroke="#bbb" stroke-width="0.8"/>
<circle cx="647.2" cy="54.3" r="3.3" stroke="#2b6fc2" stroke-width="1.1"/><path d="M644.8 56.9 l-3 3.2" stroke="#2b6fc2" stroke-width="1.3"/>
<text x="641" y="71.5" font-family="Liberation Sans" font-size="5.2" fill="#5b3fa8" stroke="none">ab</text><text x="644.5" y="76.2" font-family="Liberation Sans" font-size="4.6" fill="#2b6fc2" stroke="none">ac</text><path d="M641 72.8 v1.8 h2.4 M642.4 73.6 l1 1 l-1 1" stroke="#2b6fc2" stroke-width=".6"/>
<path d="M679.9 71.7 L681.5 73.3 L683.1 71.7" stroke="#777" stroke-width="0.9"/>
<path d="M642.5 83.9 v8 l2 -1.8 l1.6 3.3 l1.2 -.6 l-1.6 -3.2 h2.8z" fill="#fff" stroke="#666" stroke-width=".7"/>
<path d="M675.4 88.2 L677 89.8 L678.6 88.2" stroke="#777" stroke-width="0.9"/>
</svg>

  </div>
  <div id="thumbs">
<div class="tn blur" style="top:10.5px;color:#c0452a;font-size:11.5px;line-height:13px">1</div>
<div class="tn blur" style="top:74.5px;color:#555;font-size:11.5px;line-height:13px">2</div>
<div class="tn blur" style="top:139.10000000000002px;color:#555;font-size:11.5px;line-height:13px">3</div>
<div class="tn blur" style="top:202.5px;color:#555;font-size:11.5px;line-height:13px">4</div>
<div class="tn blur" style="top:267.0px;color:#555;font-size:11.5px;line-height:13px">5</div>
<div class="tn blur" style="top:331.5px;color:#555;font-size:11.5px;line-height:13px">6</div>
<div class="tn blur" style="top:395.5px;color:#555;font-size:11.5px;line-height:13px">7</div>
<div class="a blur" style="left:8.5px;top:23.5px;font-size:8px;line-height:10px;color:#555">★</div>
<div class="a blur" style="left:8.5px;top:215.5px;font-size:8px;line-height:10px;color:#555">★</div>
<div class="a" style="left:24.7px;top:12.3px;width:69.6px;height:53.6px;border:2px solid #b94a2c;background:#fff"><svg class="a blur" style="left:0;top:0" width="65.6" height="49.6" viewBox="0 0 66 50" preserveAspectRatio="none"><rect width="66" height="50" fill="#fff"/>
<rect x="56" y="1.5" width="7" height="2.4" fill="#7fa7cf" opacity=".8"/><rect x="44" y="5.6" width="19" height="1" fill="#999" opacity=".6"/>
<defs><linearGradient id="ts" x1="0" x2="1"><stop offset="0" stop-color="#2f6a3c"/><stop offset=".27" stop-color="#2f6a3c"/><stop offset=".28" stop-color="#9fb4c8"/><stop offset=".43" stop-color="#8c98a0"/><stop offset=".44" stop-color="#33343c"/><stop offset=".54" stop-color="#aab8d8"/><stop offset=".55" stop-color="#e8921a"/><stop offset=".67" stop-color="#9a5a22"/><stop offset=".68" stop-color="#2c5a8c"/><stop offset=".81" stop-color="#c8d8e0"/><stop offset=".82" stop-color="#2a55c0"/><stop offset="1" stop-color="#1c3a9a"/></linearGradient></defs>
<rect x="0" y="15" width="66" height="3.8" fill="url(#ts)"/><rect x="0" y="18.8" width="66" height="7" fill="#9a1212"/>
<rect x="7" y="20" width="15.500" height="1.700" fill="#fff" opacity=".8"/><rect x="24" y="20.400" width="34" height="1" fill="#fff" opacity=".55"/><rect x="17" y="23" width="33" height="1.700" fill="#fff" opacity=".7"/>
<rect x="51" y="27" width="13" height="1" fill="#333"/><rect x="54" y="28.6" width="9" height="2.4" fill="#444" opacity=".8"/>
<rect x="25" y="29.2" width="15" height="1.6" fill="#222"/>
<rect x="30" y="37" width="7" height="1.1" fill="#666"/><rect x="27.5" y="39.2" width="11" height="1.1" fill="#666"/><rect x="28.5" y="41.4" width="9" height="1.1" fill="#666"/>
<rect x="3" y="46" width="8" height="1.2" fill="#444"/><rect x="3" y="47.6" width="17" height="1" fill="#1a9a96" opacity=".8"/><path d="M22.5 45.5v4" stroke="#aaa" stroke-width=".4"/></svg></div>
<div class="a" style="left:26.4px;top:78.3px;width:66px;height:49.6px;border:.6px solid #cdcdcd;background:#fff;overflow:hidden"><svg class="a blur" style="left:0;top:0" width="65" height="48.6" viewBox="0 0 66 50" preserveAspectRatio="none"><rect width="66" height="50" fill="#fff"/><rect x="58" y="1.4" width="6" height="2" fill="#8fb4d8" opacity=".7"/>
<rect x="0.5" y="20.6" width="65" height="3.8" fill="#f4fafb" stroke="#9ccfd2" stroke-width=".4"/><rect x="10" y="22" width="47" height="1.3" fill="#555" opacity=".75"/><rect x="61" y="46.5" width="1" height="1" fill="#bbb"/></svg></div>
<div class="a" style="left:26.4px;top:142.6px;width:66px;height:49.6px;border:.6px solid #cdcdcd;background:#fff;overflow:hidden"><svg class="a blur" style="left:0;top:0" width="65" height="48.6" viewBox="0 0 66 50" preserveAspectRatio="none"><rect width="66" height="50" fill="#fff"/><rect x="0.5" y="1.2" width="65" height="3.4" fill="#f4fafb" stroke="#9ccfd2" stroke-width=".3"/><rect x="17" y="2.3" width="32" height="1.3" fill="#555" opacity=".75"/><rect x="58" y="1.4" width="6" height="2" fill="#8fb4d8" opacity=".7"/>
<rect x="29.5" y="14.5" width="8.5" height="2.4" fill="#a24be0"/>
<rect x="26.5" y="17.8" width="15" height="19.5" fill="#f0f8fb" stroke="#9fcfe0" stroke-width=".4"/>
<g fill="#333"><rect x="27.5" y="19.2" width="9" height="1.3"/><rect x="27.5" y="21.6" width="12" height="1.3"/><rect x="27.5" y="24" width="13" height="1.3"/><rect x="27.5" y="26.4" width="8" height="1.3"/><rect x="27.5" y="28.8" width="9" height="1.3"/><rect x="27.5" y="31.2" width="11" height="1.3"/><rect x="27.5" y="33.6" width="13" height="1.3"/></g><rect x="61" y="46.5" width="1" height="1" fill="#bbb"/></svg></div>
<div class="a" style="left:26.4px;top:206.9px;width:66px;height:49.6px;border:.6px solid #cdcdcd;background:#fff;overflow:hidden"><svg class="a blur" style="left:0;top:0" width="65" height="48.6" viewBox="0 0 66 50" preserveAspectRatio="none"><rect width="66" height="50" fill="#fff"/><rect x="14" y="2.2" width="38" height="1.6" fill="#777" opacity=".55"/><rect x="58" y="1.4" width="6" height="2" fill="#8fb4d8" opacity=".7"/><rect x="0.5" y="5.2" width="24" height="2.4" fill="#1e8a84"/><rect x="24.5" y="5.2" width="36" height="2.4" fill="#b06ad8"/><rect x="0.8" y="8.6" width="7" height="2.6" fill="#c02020"/><rect x="9" y="9" width="30" height="2" fill="#333" opacity=".8"/>
<path d="M4 12 V44 H46" stroke="#333" stroke-width=".5" fill="none"/>
<path d="M5 43 Q26 8 46 40" stroke="#444" stroke-width=".6" fill="none"/><path d="M6 42 Q30 22 46 38" stroke="#555" stroke-width=".4" fill="none"/>
<path d="M9 38 Q24 18 44 26" stroke="#e23a3a" stroke-width=".9" stroke-dasharray="3 2" fill="none"/>
<g fill="#fff" stroke="#222" stroke-width=".5"><rect x="20" y="12" width="7" height="5"/><rect x="37" y="12" width="7" height="4.5"/><rect x="7" y="25" width="7" height="4.5"/><rect x="54" y="20" width="7" height="4.5"/></g>
<path d="M27 40 v-12 M36 42 v-14 M44 44 v-8 M8 46 h38" stroke="#666" stroke-width=".4"/><rect x="3" y="42" width="2.4" height="2.4" fill="#e22"/><rect x="20" y="46.5" width="14" height="1" fill="#888" opacity=".7"/></svg></div>
<div class="a" style="left:26.4px;top:270.7px;width:66px;height:49.6px;border:.6px solid #cdcdcd;background:#fff;overflow:hidden"><svg class="a blur" style="left:0;top:0" width="65" height="48.6" viewBox="0 0 66 50" preserveAspectRatio="none"><rect width="66" height="50" fill="#fff"/><rect x="14" y="2.2" width="38" height="1.6" fill="#777" opacity=".55"/><rect x="58" y="1.4" width="6" height="2" fill="#8fb4d8" opacity=".7"/><rect x="0.5" y="5.2" width="24" height="2.4" fill="#1e8a84"/><rect x="24.5" y="5.2" width="36" height="2.4" fill="#b06ad8"/><rect x="0.8" y="8.6" width="7" height="2.6" fill="#c02020"/><rect x="9" y="9" width="16" height="1.8" fill="#333" opacity=".8"/>
<path d="M11 28 H55" stroke="#7f9fd8" stroke-width="1"/><path d="M30 17 L41 30" stroke="#e85a6a" stroke-width=".8"/><path d="M14 33 L24 27 M36 32 L48 27" stroke="#e85a6a" stroke-width=".7"/>
<g stroke="#3a55c8" stroke-width=".9"><path d="M30 16 v6 M34 18 v6 M38 21 v6 M13 31 v6 M17 30 v8 M22 28 v6 M36 31 v6 M40 30 v8 M44 28 v7 M47 27 v5"/></g><rect x="30" y="40" width="8" height="1" fill="#999"/></svg></div>
<div class="a" style="left:26.4px;top:335px;width:66px;height:49.6px;border:.6px solid #cdcdcd;background:#fff;overflow:hidden"><svg class="a blur" style="left:0;top:0" width="65" height="48.6" viewBox="0 0 66 50" preserveAspectRatio="none"><rect width="66" height="50" fill="#fff"/><rect x="14" y="2.2" width="38" height="1.6" fill="#777" opacity=".55"/><rect x="58" y="1.4" width="6" height="2" fill="#8fb4d8" opacity=".7"/><rect x="0.5" y="5.2" width="24" height="2.4" fill="#1e8a84"/><rect x="24.5" y="5.2" width="36" height="2.4" fill="#b06ad8"/><rect x="0.8" y="8.6" width="7" height="2.6" fill="#c02020"/><g fill="#333" opacity=".8"><rect x="3" y="13" width="50" height="1.1"/><rect x="3" y="17" width="30" height="1.1"/><rect x="5" y="19.4" width="35" height="1.1"/><rect x="5" y="21.6" width="52" height="1.1"/><rect x="5" y="23.8" width="28" height="1.1"/><rect x="3" y="26" width="50" height="1.1"/><rect x="5" y="28.2" width="20" height="1.1"/></g><rect x="3" y="15.2" width="3" height="1.4" fill="#e22"/>
<rect x="56" y="11.5" width="8.5" height="9.5" fill="#8aa0b8"/><rect x="57.5" y="12.5" width="2.5" height="8" fill="#3a4a6a"/><rect x="61" y="13.5" width="2.4" height="7" fill="#6a7a4a"/><rect x="61" y="46.5" width="1" height="1" fill="#bbb"/></svg></div>
<div class="a" style="left:26.4px;top:399px;width:66px;height:49.6px;border:.6px solid #cdcdcd;background:#fff;overflow:hidden"><svg class="a blur" style="left:0;top:0" width="65" height="48.6" viewBox="0 0 66 50" preserveAspectRatio="none"><rect width="66" height="50" fill="#fff"/><rect x="14" y="2.2" width="38" height="1.6" fill="#777" opacity=".55"/><rect x="58" y="1.4" width="6" height="2" fill="#8fb4d8" opacity=".7"/><rect x="0.5" y="5.2" width="24" height="2.4" fill="#1e8a84"/><rect x="24.5" y="5.2" width="36" height="2.4" fill="#b06ad8"/><rect x="8" y="8.4" width="58" height="3.4" fill="#9fd000"/><rect x="8" y="11.6" width="58" height="39" fill="#fdc48e"/><rect x="8" y="11.5" width="11.5" height="3.6" fill="#c78af0"/><rect x="8" y="15.8" width="11.5" height="3.6" fill="#c78af0"/><rect x="8" y="20.1" width="11.5" height="3.6" fill="#c78af0"/><rect x="8" y="24.4" width="11.5" height="3.6" fill="#c78af0"/><rect x="8" y="28.7" width="11.5" height="3.6" fill="#c78af0"/><rect x="8" y="33.0" width="11.5" height="3.6" fill="#c78af0"/><rect x="8" y="37.3" width="11.5" height="3.6" fill="#c78af0"/><rect x="8" y="41.599999999999994" width="11.5" height="3.6" fill="#c78af0"/><rect x="8" y="45.9" width="11.5" height="3.6" fill="#c78af0"/><rect x="23" y="12.5" width="4" height="1.2" fill="#444" opacity=".7"/><rect x="32" y="12.5" width="4" height="1.2" fill="#444" opacity=".7"/><rect x="41" y="12.5" width="4" height="1.2" fill="#444" opacity=".7"/><rect x="50" y="12.5" width="4" height="1.2" fill="#444" opacity=".7"/><rect x="59" y="12.5" width="4" height="1.2" fill="#444" opacity=".7"/><rect x="23" y="16.8" width="4" height="1.2" fill="#444" opacity=".7"/><rect x="32" y="16.8" width="4" height="1.2" fill="#444" opacity=".7"/><rect x="41" y="16.8" width="4" height="1.2" fill="#444" opacity=".7"/><rect x="50" y="16.8" width="4" height="1.2" fill="#444" opacity=".7"/><rect x="59" y="16.8" width="4" height="1.2" fill="#444" opacity=".7"/><rect x="23" y="21.1" width="4" height="1.2" fill="#444" opacity=".7"/><rect x="32" y="21.1" width="4" height="1.2" fill="#444" opacity=".7"/><rect x="41" y="21.1" width="4" height="1.2" fill="#444" opacity=".7"/><rect x="50" y="21.1" width="4" height="1.2" fill="#444" opacity=".7"/><rect x="59" y="21.1" width="4" height="1.2" fill="#444" opacity=".7"/><rect x="23" y="25.4" width="4" height="1.2" fill="#444" opacity=".7"/><rect x="32" y="25.4" width="4" height="1.2" fill="#444" opacity=".7"/><rect x="41" y="25.4" width="4" height="1.2" fill="#444" opacity=".7"/><rect x="50" y="25.4" width="4" height="1.2" fill="#444" opacity=".7"/><rect x="59" y="25.4" width="4" height="1.2" fill="#444" opacity=".7"/><rect x="23" y="29.7" width="4" height="1.2" fill="#444" opacity=".7"/><rect x="32" y="29.7" width="4" height="1.2" fill="#444" opacity=".7"/><rect x="41" y="29.7" width="4" height="1.2" fill="#444" opacity=".7"/><rect x="50" y="29.7" width="4" height="1.2" fill="#444" opacity=".7"/><rect x="59" y="29.7" width="4" height="1.2" fill="#444" opacity=".7"/><rect x="23" y="34.0" width="4" height="1.2" fill="#444" opacity=".7"/><rect x="32" y="34.0" width="4" height="1.2" fill="#444" opacity=".7"/><rect x="41" y="34.0" width="4" height="1.2" fill="#444" opacity=".7"/><rect x="50" y="34.0" width="4" height="1.2" fill="#444" opacity=".7"/><rect x="59" y="34.0" width="4" height="1.2" fill="#444" opacity=".7"/><rect x="23" y="38.3" width="4" height="1.2" fill="#444" opacity=".7"/><rect x="32" y="38.3" width="4" height="1.2" fill="#444" opacity=".7"/><rect x="41" y="38.3" width="4" height="1.2" fill="#444" opacity=".7"/><rect x="50" y="38.3" width="4" height="1.2" fill="#444" opacity=".7"/><rect x="59" y="38.3" width="4" height="1.2" fill="#444" opacity=".7"/><rect x="23" y="42.599999999999994" width="4" height="1.2" fill="#444" opacity=".7"/><rect x="32" y="42.599999999999994" width="4" height="1.2" fill="#444" opacity=".7"/><rect x="41" y="42.599999999999994" width="4" height="1.2" fill="#444" opacity=".7"/><rect x="50" y="42.599999999999994" width="4" height="1.2" fill="#444" opacity=".7"/><rect x="59" y="42.599999999999994" width="4" height="1.2" fill="#444" opacity=".7"/><rect x="23" y="46.9" width="4" height="1.2" fill="#444" opacity=".7"/><rect x="32" y="46.9" width="4" height="1.2" fill="#444" opacity=".7"/><rect x="41" y="46.9" width="4" height="1.2" fill="#444" opacity=".7"/><rect x="50" y="46.9" width="4" height="1.2" fill="#444" opacity=".7"/><rect x="59" y="46.9" width="4" height="1.2" fill="#444" opacity=".7"/><rect x="1" y="8.5" width="6" height="3" fill="#c02020"/><rect x="1" y="21" width="5" height="4.2" fill="#fff" stroke="#444" stroke-width=".6"/></svg></div>
<div class="a" style="left:108px;top:0;width:11px;height:438px;background:#e0e0e0"></div>
<div class="a" style="left:108px;top:2px;width:11px;height:10px;background:#f6f6f6;border:.6px solid #cfcfcf"></div>
<svg class="a" style="left:108px;top:2px" width="11" height="10"><path d="M3 6.5 L5.5 3.8 L8 6.5z" fill="#555"/></svg>
<div class="a" style="left:108px;top:12.3px;width:11px;height:35px;background:#fdfdfd;border:.6px solid #c8c8c8"></div>
<div class="a" style="left:108px;top:426px;width:11px;height:10.5px;background:#f6f6f6;border:.6px solid #cfcfcf"></div>
<svg class="a" style="left:108px;top:426px" width="11" height="10.5"><path d="M3 4 L5.5 6.8 L8 4z" fill="#555"/></svg>
<div class="a" style="left:120.5px;top:0;width:1px;height:438px;background:#d0d0d0"></div>

  </div>
  <div id="edit"></div>
  <div id="slide">
<!-- university logo -->
<svg class="a blur" style="left:437px;top:0px" width="80" height="26" viewBox="0 0 80 26">
  <defs><linearGradient id="lg" x1="0" y1="0" x2="0" y2="1"><stop offset="0" stop-color="#2f6fc0"/><stop offset=".55" stop-color="#6fa4dc"/><stop offset="1" stop-color="#eef4fb"/></linearGradient></defs>
  <circle cx="13.600" cy="12.700" r="11" fill="#f4f7fb" stroke="#9fb2c8" stroke-width=".6"/>
  <circle cx="13.600" cy="12.700" r="9.600" fill="none" stroke="#7088a8" stroke-width="1.200" stroke-dasharray=".7 .9"/>
  <circle cx="13.600" cy="12.700" r="7.500" fill="url(#lg)" stroke="#3f74b3" stroke-width=".5"/>
  <path d="M9.400 16.600 h8.400 v1.400 h-8.400z M10.200 13.400 h6.800 v3.200 h-6.800z M12 11.400 h3.200 v2 h-3.200z M13.200 9.600 h.8 v1.800 h-.8z" fill="#fff" opacity=".9"/>
  <text x="28.500" y="15.400" font-family="'Liberation Serif','Noto Serif CJK SC',serif" font-size="8.800" font-style="italic" font-weight="700" fill="#2a6a7c" textLength="47" lengthAdjust="spacingAndGlyphs">华南理工大学</text>
  <text x="28.600" y="19.700" font-family="'Liberation Sans',sans-serif" font-size="2.300" font-weight="700" fill="#2a7a8c" textLength="46.500" lengthAdjust="spacingAndGlyphs">SOUTH CHINA UNIVERSITY OF TECHNOLOGY</text>
</svg>
<div class="a blur" style="left:347.5px;top:33px;width:154px;font:9px/12px 'Liberation Serif','Noto Serif CJK SC',serif;letter-spacing:1.05px;color:#4a4a4a;white-space:nowrap">与广东轻工学院的师生们交流学习</div>

<!-- photo strip -->
<svg class="a" style="left:0;top:116.5px" width="517" height="29" viewBox="0 0 517 29" preserveAspectRatio="none">
  <defs>
    <filter id="pb" x="0" y="0" width="100%" height="100%"><feGaussianBlur stdDeviation=".55"/></filter>
    <linearGradient id="p1" x1="0" y1="0" x2="0" y2="1"><stop offset="0" stop-color="#4d8a68"/><stop offset=".3" stop-color="#2f6e3c"/><stop offset=".7" stop-color="#275f2c"/><stop offset="1" stop-color="#1c4a22"/></linearGradient>
    <linearGradient id="p2" x1="0" y1="0" x2="0" y2="1"><stop offset="0" stop-color="#5a94d4"/><stop offset=".3" stop-color="#9cc0e4"/><stop offset=".52" stop-color="#d4e2ee"/><stop offset=".58" stop-color="#8a9a98"/><stop offset="1" stop-color="#70807a"/></linearGradient>
    <linearGradient id="p3" x1="0" y1="0" x2="1" y2="1"><stop offset="0" stop-color="#d4dff2"/><stop offset=".5" stop-color="#c0d2f0"/><stop offset="1" stop-color="#9cbcf0"/></linearGradient>
    <linearGradient id="p4" x1="0" y1="0" x2="0" y2="1"><stop offset="0" stop-color="#f08c08"/><stop offset=".2" stop-color="#fbb020"/><stop offset=".4" stop-color="#f09a28"/><stop offset=".55" stop-color="#b8602a"/><stop offset="1" stop-color="#7a4428"/></linearGradient>
    <linearGradient id="p5" x1="0" y1="0" x2="0" y2="1"><stop offset="0" stop-color="#182888"/><stop offset=".35" stop-color="#24488a"/><stop offset="1" stop-color="#245a3a"/></linearGradient>
    <linearGradient id="p6" x1="0" y1="0" x2="0" y2="1"><stop offset="0" stop-color="#1838b0"/><stop offset=".54" stop-color="#4a7cdc"/><stop offset=".55" stop-color="#5a7a40"/><stop offset=".66" stop-color="#6a8a4a"/><stop offset=".67" stop-color="#2848a8"/><stop offset="1" stop-color="#141f78"/></linearGradient>
  </defs>
  <g filter="url(#pb)">
  <!-- 1 interchange -->
  <rect x="-2" y="-2" width="146" height="33" fill="url(#p1)"/>
  <path d="M-2 7 Q30 2 70 8 T144 2 V-2 H-2Z" fill="#6a9e82" opacity=".55"/>
  <path d="M-2 16 Q40 10 70 16 Q40 22 -2 22Z" fill="#3a7a40" opacity=".6"/>
  <path d="M-2 27 Q40 22 72 17 Q100 11 144 2" fill="none" stroke="#c4ccbc" stroke-width="1.7"/>
  <ellipse cx="90" cy="18.500" rx="17" ry="5.200" fill="#74843a" stroke="#d4dacb" stroke-width="1.600"/>
  <path d="M30 30 Q70 24 108 17 Q125 12 144 10" fill="none" stroke="#a8b4a0" stroke-width="1"/>
  <path d="M60 12 Q75 10 90 13" fill="none" stroke="#9ab09a" stroke-width=".8"/>
  <!-- 2 highway -->
  <rect x="143" y="-2" width="84" height="33" fill="url(#p2)"/>
  <path d="M143 17 h84 v2.500 h-84z" fill="#7a9478" opacity=".8"/>
  <path d="M160 31 L184 16.500 L192 16.500 L225 31Z" fill="#80848c"/>
  <path d="M143 31 V22 L178 17 L160 31Z" fill="#8a9080"/>
  <path d="M143 31 V25 L170 18.500 L150 31Z" fill="#767c82"/>
  <path d="M187 31 L187.500 16.500 L188.500 16.500 L192 31Z" fill="#7a9a5a"/>
  <path d="M176 31 L185.500 17 M200 31 L190.500 17 M212 31 L191.500 17" stroke="#c8ccd0" stroke-width=".5"/>
  <path d="M227 31 V22 L196 17.500 L227 21Z" fill="#6a8a58"/>
  <rect x="165" y="5.600" width="11" height="4.200" fill="#5a84b0"/><rect x="170" y="9.800" width="1" height="7" fill="#8a94a0"/>
  <rect x="196" y="20" width="3" height="2.400" fill="#3a5aa0"/>
  <!-- 3 bridge underside -->
  <rect x="227" y="-2" width="55" height="33" fill="url(#p3)"/>
  <path d="M227 -2 H251.300 V24 H243 L236 12 L227 0Z" fill="#2c2e34"/>
  <path d="M253.500 -2 H283 V0 L270.400 15 L263 24 H253.500Z" fill="#2c2e34"/>
  <path d="M229 -2 L246 24 M256 -2 L256 24 M262 -2 L260 24" stroke="#44464e" stroke-width=".6"/>
  <rect x="238" y="1.500" width="4.500" height="30" fill="#b4a6c8"/><rect x="262.300" y="1.500" width="5" height="30" fill="#b4a6c8"/>
  <rect x="239" y="1.500" width="1.200" height="30" fill="#d8cce4"/><rect x="263.300" y="1.500" width="1.300" height="30" fill="#d8cce4"/>
  <path d="M246 24 v7 M249.500 24 v7 M255.500 24 v7 M259 24 v7" stroke="#3a3c44" stroke-width="1.200"/>
  <!-- 4 sunset -->
  <rect x="282" y="-2" width="65" height="33" fill="url(#p4)"/>
  <ellipse cx="302" cy="5.800" rx="10" ry="2.400" fill="#ffe060" opacity=".9"/><ellipse cx="302" cy="5.800" rx="3" ry="1.400" fill="#fff4a0"/>
  <path d="M282 7.500 L290 9 L298 12.500 L308 16.500 L320 15 L335 13 L347 10.500 V31 H282Z" fill="#8a4a22" opacity=".9"/>
  <path d="M308 16 L325 14 L347 11 V18 L310 19Z" fill="#c87832" opacity=".7"/>
  <path d="M282 19 L300 18 L320 20 L347 19 V31 H282Z" fill="#8c5030" opacity=".9"/>
  <path d="M282 24 L305 23 L330 25 L347 24 V31 H282Z" fill="#6a3c24" opacity=".8"/>
  <!-- 5 winding road -->
  <rect x="347" y="-2" width="74" height="33" fill="url(#p5)"/>
  <path d="M347 6 Q360 8 372 14 Q380 22 376 31 H347Z" fill="#1f5a32"/>
  <path d="M390 3 Q400 1 410 4 L421 8 V-2 H380Z" fill="#2a3a8a" opacity=".7"/>
  <path d="M396 5 Q402 3 408 6" stroke="#7a6ab0" stroke-width="1.200" fill="none" opacity=".7"/>
  <path d="M347 2.200 Q372 4.500 393 9 Q404 12 398 15.500 Q374 21 360.500 31 H410 Q408 24 413 18 Q420 11 402 6.500 Q378 1.500 347 0.500Z" fill="#d8e8f0"/>
  <path d="M404 31 Q404 22 412 17 L421 14 V31Z" fill="#6a7e62"/>
  <path d="M381 31 Q388 22 404 15.500 Q409 12 398 9" fill="none" stroke="#4a5a5e" stroke-width="1.100"/>
  <path d="M370 31 Q380 21 400 15" fill="none" stroke="#a8c4d0" stroke-width=".7"/>
  <path d="M362 26 l3 -4 M368 29 l2 -5" stroke="#cfe0d8" stroke-width=".6"/>
  <!-- 6 viaduct -->
  <rect x="421" y="-2" width="98" height="33" fill="url(#p6)"/>
  <path d="M421 15.500 Q440 13.500 460 15.500 T519 15 V17 H421Z" fill="#3a5a4a" opacity=".8"/>
  <path d="M448 3.200 L519 11.600 V13.400 L448 5Z" fill="#4a4a54"/>
  <g fill="#dcd6cc"><rect x="434.800" y="5" width="2" height="11.500"/><rect x="438.500" y="4.400" width="2" height="12"/><rect x="434.800" y="4.400" width="5.700" height="1.400"/>
  <rect x="454" y="5.500" width="1.800" height="11"/><rect x="459" y="6" width="1.800" height="10.500"/><rect x="468" y="7.200" width="1.500" height="9.300"/><rect x="472.500" y="7.700" width="1.500" height="8.800"/><rect x="480" y="8.600" width="1.300" height="7.900"/><rect x="484" y="9" width="1.300" height="7.500"/><rect x="490.500" y="9.800" width="1.100" height="6.700"/><rect x="496" y="10.400" width="1.100" height="6.100"/><rect x="501.500" y="11" width="1" height="5.500"/><rect x="506.500" y="11.600" width="1" height="4.900"/><rect x="511" y="12.200" width="1" height="4.300"/></g>
  <g fill="#8a9ce0" opacity=".45"><rect x="434.800" y="19.500" width="5.700" height="10"/><rect x="454" y="19.500" width="6.800" height="9"/><rect x="468" y="19.500" width="6" height="8"/><rect x="480" y="19.500" width="5.300" height="7"/><rect x="490.500" y="19.500" width="6.600" height="6"/></g>
  <path d="M448 25 L519 20" stroke="#5a5aa0" stroke-width="1" opacity=".5"/>
  </g>
  <path d="M143 0 V29 M227 0 V29 M282 0 V29 M347 0 V29 M421 0 V29" stroke="#000" stroke-opacity=".12" stroke-width=".5"/>
</svg>

<!-- red banner -->
<div class="a" style="left:0;top:145px;width:517px;height:54px;background:linear-gradient(180deg,#7d0a0a 0%,#8f1010 35%,#a81a1a 75%,#b32222 100%)"></div>
<div class="a blur" style="left:0;top:150px;width:517px;text-align:center;color:#fff;white-space:nowrap;font-size:20px;line-height:24px">价值工程/管理<span style="font-size:14.7px;position:relative;top:-1px">（Value Engineering/Management, VE/VM）</span></div>
<div class="a blur" style="left:0;top:173px;width:517px;text-align:center;color:#fff;white-space:nowrap;font-size:20px;line-height:24px">创新管理世界的一颗璀璨明珠</div>

<!-- notes top right -->
<div class="a blur" style="left:398px;top:204.5px;font:700 7.2px/8.6px 'Liberation Serif','Noto Serif CJK SC',serif;color:#111;white-space:nowrap">备注:&nbsp;&nbsp; 本系列讲座包含3个部分:<br><span style="padding-left:27px">1. VE/VM 基本概念</span><br><span style="padding-left:27px">2. VE/VM分析方法</span><br><span style="padding-left:27px">3. VE/VM创新方法、活动</span></div>

<div class="a blur" style="left:150px;top:220px;width:204px;text-align:center;font:700 13.8px/18px 'Liberation Serif','Noto Serif CJK SC',serif;color:#111;white-space:nowrap">2. VE/VM 分析方法</div>

<div class="a blur" style="left:150px;top:285px;width:200px;text-align:center;font:12px/16.4px 'Liberation Serif','Noto Serif CJK SC',serif;color:#333;letter-spacing:.8px;white-space:nowrap">张彩江<br>华南理工大学<br>2020-12-07</div>

<!-- contact box -->
<div class="a" style="left:21px;top:357px;width:155px;height:30px;border-right:1px solid #999"></div>
<div class="a blur" style="left:25px;top:359.6px;font:700 6.1px/7.7px 'Liberation Sans','Noto Sans CJK SC',sans-serif;color:#222;white-space:nowrap">联系地址：<br>广州市大学城华南理工大学&nbsp; 张彩江<br>小谷围岛510006，<span style="color:#1a9a96;text-decoration:underline">zcj@scut.edu.cn</span>,13672433356</div>

  </div>
<div class="a" style="left:727.6px;top:114.6px;width:10px;height:361px;background:#dcdcdc"></div>
<div class="a" style="left:727.6px;top:114.6px;width:10px;height:9.6px;background:#fff"></div>
<div class="a" style="left:727.6px;top:124.2px;width:10px;height:12.4px;background:#fff;border:.7px solid #bdbdbd"></div>
<div class="a" style="left:727.6px;top:465.7px;width:10px;height:9.6px;background:#fff"></div>
<svg class="a blur" style="left:727.6px;top:114.6px" width="10" height="390" viewBox="0 0 10 390">
  <path d="M2.6 6 L5 3.4 L7.4 6z" fill="#555"/>
  <path d="M2.6 354 L5 356.8 L7.4 354z" fill="#555"/>
  <path d="M2.8 368 L5 365.4 L7.2 368z M2.8 371.4 L5 368.8 L7.2 371.4z" fill="#555"/>
  <path d="M2.8 377.6 L5 380.2 L7.2 377.6z M2.8 381 L5 383.6 L7.2 381z" fill="#555"/>
</svg>

  <div id="notes"><div class="a blur" style="left:7px;top:3.4px;font-size:10.5px;line-height:14px;color:#555">单击此处添加备注</div></div>
  <div id="status">
<div class="st blur" style="left:6.8px;top:2.2px;font-size:9px;line-height:11px;color:#3a3a3a;word-spacing:-.6px">幻灯片 第 1 张<span style="margin-right:-2.2px">，</span>共 81 张</div>
<div class="st blur" style="left:136.8px;top:2.2px;font-size:8.8px;line-height:11px;color:#3a3a3a">中文(中国)</div>
<div class="st blur" style="left:334px;top:2.2px;font-size:9px;line-height:11px;color:#3a3a3a">备注</div>
<div class="st blur" style="left:375px;top:2.2px;font-size:8.7px;line-height:11px;color:#3a3a3a">显示器设置</div>
<div class="st blur" style="left:444.7px;top:2.2px;font-size:8.7px;line-height:11px;color:#3a3a3a">批注</div>
<div class="st blur" style="left:690px;top:2.2px;font-size:9.4px;line-height:11px;color:#444">76%</div>
<div class="a" style="left:475px;top:0;width:27px;height:15px;background:#c8c8c8"></div>
<svg class="a blur" style="left:0;top:0" width="739" height="15" viewBox="0 0 739 15" fill="none" stroke="#666" stroke-width=".8">
  <!-- spell/book icon -->
  <path d="M113.5 4 h4 v7 h-4z M117.5 4 h2.5 M117.5 11 h4 v-3.5 M119.5 8.5 l2.6 -4" stroke="#777"/>
  <!-- notes icon -->
  <path d="M324 10.5 h7 M325 8.6 h5 M325.6 7 l1.9 -2.4 l1.9 2.4z" stroke="#666" stroke-width=".7"/>
  <!-- display settings -->
  <rect x="363.5" y="3.6" width="8.5" height="6" fill="#444" stroke="#444"/><path d="M366 11.4 h3.5" stroke="#444"/><circle cx="372" cy="10" r="2" fill="#f3f3f3" stroke="#444" stroke-width=".8"/>
  <!-- comment -->
  <path d="M433 3.8 h8.5 v5.6 h-5 l-2 2 v-2 h-1.5z" fill="#444" stroke="#444"/>
  <!-- normal view -->
  <rect x="484.5" y="3.2" width="8.6" height="8.6" stroke="#777"/><rect x="486.6" y="5" width="4.4" height="3" stroke="#777" stroke-width=".6"/><path d="M486.4 10 h4.8" stroke="#777" stroke-width=".6"/>
  <!-- sorter -->
  <g stroke="#888" stroke-width=".7"><rect x="512" y="3.4" width="3.2" height="3"/><rect x="517" y="3.4" width="3.2" height="3"/><rect x="512" y="8.4" width="3.2" height="3"/><rect x="517" y="8.4" width="3.2" height="3"/></g>
  <!-- reading -->
  <g stroke="#888" stroke-width=".7"><path d="M541 3.6 h3.6 v8 h-3.6z M545.4 3.6 h3.6 v8 h-3.6z"/><path d="M542 5.6 h1.6 M542 7.4 h1.6 M546.4 5.6 h1.6 M546.4 7.4 h1.6" stroke-width=".5"/></g>
  <!-- slideshow -->
  <g stroke="#888" stroke-width=".7"><path d="M569.5 3.4 h9.5 M570.6 3.4 v5 h7.3 v-5 M574.2 8.4 v2 M572.6 12 l1.6 -1.6 l1.6 1.6"/></g>
  <!-- zoom -->
  <path d="M591.5 7.6 h4.5" stroke="#666" stroke-width=".9"/>
  <path d="M601 7.6 h71" stroke="#9a9a9a" stroke-width=".7"/><path d="M637 5.6 v4" stroke="#9a9a9a" stroke-width=".7"/>
  <rect x="626.4" y="3.4" width="2.4" height="8.4" fill="#555" stroke="none"/>
  <path d="M676 7.6 h4.6 M678.3 5.3 v4.6" stroke="#666" stroke-width=".9"/>
  <!-- fit -->
  <rect x="718.6" y="4" width="6.8" height="6.8" stroke="#777" stroke-width=".7"/><path d="M720 5.4 l1.2 1.2 M724 5.4 l-1.2 1.2 M720 9.4 l1.2 -1.2 M724 9.4 l-1.2 -1.2" stroke="#777" stroke-width=".6"/>
</svg>

  </div>
</div>

<!-- tencent meeting indicator pill -->
<div class="a" style="left:506px;top:102.200px;width:78.400px;height:14.400px;background:rgba(28,24,22,.78);border-radius:0 0 3px 3px"></div>
<svg class="a blur" style="left:506px;top:102.200px" width="78.400" height="14.400" viewBox="0 0 78.400 14.400"><rect x="4.600" y="8.600" width="1.700" height="3" fill="#1fc86a"/><rect x="7.200" y="7" width="1.700" height="4.600" fill="#1fc86a"/><rect x="9.800" y="5.600" width="1.700" height="6" fill="#1fc86a"/><rect x="12.200" y="4.600" width="1.700" height="7" fill="#1fc86a" opacity=".55"/><circle cx="19.700" cy="7.500" r="3.200" fill="#1fc86a"/><path d="M65.600 6 h2 l3 -2.600 v8.200 l-3 -2.600 h-2z" fill="#1fc86a"/><path d="M72 5 q1.800 2.500 0 5" stroke="#1fc86a" stroke-width="1.200" fill="none" opacity=".8"/></svg>
<div class="a blur" style="left:533px;top:104.200px;font-size:8.400px;line-height:11px;color:#d0d0d0;white-space:nowrap">腾讯会议</div>

<!-- grey floating toolbar bottom-left -->
<div class="a" style="left:8.600px;top:610px;width:81.700px;height:20.800px;border-radius:10.400px;background:rgba(75,75,75,.6)"></div>
<svg class="a blur" style="left:8.600px;top:610px" width="81.700" height="20.800" viewBox="0 0 81.700 20.800" opacity=".8"><g fill="#cfcfcf"><rect x="7" y="6" width="3.200" height="3.200"/><rect x="7" y="10.200" width="3.200" height="3.200"/><rect x="7" y="14.400" width="3.200" height="2.400"/><circle cx="14" cy="7.400" r="1.900"/><path d="M11.400 11.600 q2.600 -2.400 5.200 0 v5 h-5.200z"/></g><path d="M21.700 5 v11 M62 5 v11" stroke="#bdbdbd" stroke-width=".9"/><circle cx="35.400" cy="10.700" r="5.300" fill="#d4d4d4"/><circle cx="33.400" cy="9.200" r=".8" fill="#666"/><circle cx="37.400" cy="9.200" r=".8" fill="#666"/><path d="M32.400 11.600 q3 3.600 6 0z" fill="#666"/><path d="M47.400 5.800 h9 v7.600 h-6 l-2 2 v-2 h-1z" fill="#d4d4d4"/><circle cx="49.600" cy="9.600" r=".7" fill="#666"/><circle cx="52" cy="9.600" r=".7" fill="#666"/><circle cx="54.400" cy="9.600" r=".7" fill="#666"/><path d="M72 7.400 l-3 3.300 l3 3.300" stroke="#d4d4d4" stroke-width="1.300" fill="none"/></svg>

<!-- sogou IME bar -->
<div class="a" style="left:918px;top:658.400px;width:162px;height:18.200px;background:#fff;border-radius:2px"></div>
<svg class="a blur" style="left:900px;top:652px" width="182" height="28" viewBox="0 0 182 28">
  <g transform="rotate(-12 14 14.500)"><rect x="3.400" y="4.600" width="21.500" height="20" rx="3.500" fill="#f0582a"/><text x="14.200" y="22.400" font-family="'Liberation Sans',sans-serif" font-size="21.500" font-weight="700" fill="#fff" text-anchor="middle" transform="translate(14.200 0) scale(1.200 1) translate(-14.200 0)">S</text></g>
  <g fill="none" stroke="#1a6fd8" stroke-width="1.500">
    <text x="34.200" y="20.400" font-family="'Liberation Sans','Noto Sans CJK SC',sans-serif" font-size="11.500" font-weight="700" fill="#1a6fd8" stroke="none" text-anchor="middle">中</text>
    <path d="M54.800 10.200 a5.800 5.800 0 1 1 -6.600 8.400 a6.400 6.400 0 0 0 6.600 -8.400z" fill="#1a6fd8" stroke="none"/>
    <circle cx="67.200" cy="14.200" r="1.300" fill="#1a6fd8" stroke="none"/><path d="M72 16 q1.200 2 -.8 4" stroke-width="1.600"/>
    <circle cx="85.600" cy="16" r="5.200" fill="#1a6fd8" stroke="none"/><circle cx="83.800" cy="14.400" r=".9" fill="#fff" stroke="none"/><circle cx="87.400" cy="14.400" r=".9" fill="#fff" stroke="none"/><path d="M83 17.200 q2.600 2.800 5.200 0z" fill="#fff" stroke="none"/>
    <path d="M99.400 19.400 l1 -3.400 l5.400 -5.400 l2.400 2.400 l-5.400 5.400z" fill="#1a6fd8" stroke="none"/><path d="M98.200 21.200 h3 M104.400 21.200 h3.400" stroke-width="1.300"/>
    <text x="119.800" y="21.200" font-family="'Liberation Sans',sans-serif" font-size="13.500" font-weight="700" fill="#1a6fd8" stroke="none" text-anchor="middle">Ω</text>
    <rect x="132.200" y="11.800" width="10" height="8" rx="1.200" fill="#e8f0fc" stroke="#1a6fd8" stroke-width="1.300"/><path d="M134 14 h6.400 M134 15.800 h6.400 M135.200 17.700 h4" stroke="#1a6fd8" stroke-width=".9" stroke-dasharray="1 .6"/>
    <path d="M151 10.600 l5.400 8 M157.400 10.600 l-5.400 8" stroke-width="1.400"/><circle cx="151" cy="19.800" r="1.800" stroke-width="1.300"/><circle cx="157.400" cy="19.800" r="1.800" stroke-width="1.300"/>
    <g fill="#1a6fd8" stroke="none"><rect x="166.600" y="11.200" width="3.800" height="3.800" rx=".8"/><circle cx="173.800" cy="13.100" r="2"/><rect x="166.600" y="16.600" width="3.800" height="3.800" rx=".8"/><rect x="171.800" y="16.600" width="3.800" height="3.800" rx=".8"/></g>
  </g>
</svg>
<!-- sub-pixel top edge of ppt window -->
<div class="a" style="left:39px;top:105px;width:739px;height:.7px;background:#000"></div>
<div class="g" style="left:39px;top:105px;width:29px;height:.7px"></div>


<!-- taskbar -->
<div id="task">
<div class="a" style="left:67.3px;top:0;width:64px;height:27px;background:#ececec"></div>
<div class="ul" style="left:67.3px;width:64px"></div>
<div class="ul" style="left:137.4px;width:62px"></div>
<div class="ul" style="left:205.5px;width:62px"></div>
<div class="ul" style="left:272.8px;width:62px"></div>
<div class="ul" style="left:401px;width:62px"></div>
<div class="ul" style="left:529px;width:55px"></div>
<div class="ul" style="left:596.5px;width:61px"></div>
<div class="ul" style="left:723px;width:62px"></div>
<div class="ul" style="left:790px;width:61px"></div>
<div class="tkl blur" style="left:92.5px">文件资...</div>
<div class="tkl blur" style="left:160.5px">下-202...</div>
<div class="tkl blur" style="left:227.3px">王平西-...</div>
<div class="tkl blur" style="left:294.7px">202106...</div>
<div class="tkl blur" style="left:423px">网址大...</div>
<div class="tkl blur" style="left:550.8px">微信</div>
<div class="tkl blur" style="left:618px">中金财...</div>
<div class="tkl blur" style="left:744.8px">腾讯会议</div>
<div class="tkl blur" style="left:811.9px">Groov...</div>
<div class="tkl blur" style="left:1006px;top:2px;width:40px;text-align:center;font-size:9.2px;line-height:11px;color:#222;font-weight:400">14:23</div>
<div class="tkl blur" style="left:996px;top:15.2px;width:60px;text-align:center;font-size:9.2px;line-height:11px;color:#222;font-weight:400">2021/6/25</div>
<svg class="a blur" style="left:0;top:0" width="1090" height="27" viewBox="0 0 1090 27">
  <!-- start -->
  <path d="M11.6 10.2 l4.8 -.7 v4.3 h-4.8z M17.2 9.4 l5.8 -.8 v5.2 h-5.8z M11.6 14.6 h4.8 v4.3 l-4.8 -.7z M17.2 14.6 h5.8 v5.2 l-5.8 -.8z" fill="#111"/>
  <!-- gear -->
  <g transform="translate(51 14)" stroke="#222" fill="none"><circle r="3.1" stroke-width="1.5"/><g stroke-width="1.6"><path d="M0 -4 v-1.8 M0 4 v1.8 M-4 0 h-1.8 M4 0 h1.8 M-2.8 -2.8 l-1.3 -1.3 M2.8 2.8 l1.3 1.3 M-2.8 2.8 l-1.3 1.3 M2.8 -2.8 l1.3 -1.3"/></g></g>
  <!-- folder -->
  <path d="M73 8.2 h5.6 l1.4 1.4 h8.6 v10.6 h-15.6z" fill="#f5c14c"/><path d="M73 8.2 h5.4 v1.4 h-5.4z" fill="#d89a1c"/><path d="M76 15 h9.6 v5.2 h-2.6 v-2.8 h-4.4 v2.8 h-2.6z" fill="#3b8edb"/>
  <!-- word -->
  <rect x="145" y="7.6" width="10.4" height="12.8" rx="1" fill="#2f6fd0"/><rect x="145" y="7.6" width="10.4" height="4.2" fill="#4a9af0"/><rect x="145" y="16" width="10.4" height="4.4" fill="#1f4fa8"/><rect x="140" y="10" width="8.4" height="8.4" rx="1" fill="#1a55b8"/><text x="144.2" y="16.8" font-family="Liberation Sans" font-weight="700" font-size="6.4" fill="#fff" text-anchor="middle">W</text>
  <!-- excel -->
  <rect x="212.6" y="7.6" width="10.4" height="12.8" rx="1" fill="#21a366"/><rect x="212.6" y="7.6" width="10.4" height="4.2" fill="#33c481"/><rect x="212.6" y="16" width="10.4" height="4.4" fill="#185c37"/><rect x="207.5" y="10" width="8.4" height="8.4" rx="1" fill="#107c41"/><text x="211.7" y="16.6" font-family="Liberation Sans" font-weight="700" font-size="6.2" fill="#fff" text-anchor="middle">X</text>
  <!-- ppt -->
  <circle cx="284.4" cy="14" r="6.6" fill="#e8603c"/><path d="M284.4 7.4 a6.6 6.6 0 0 1 6.6 6.6 h-6.6z" fill="#f59a7a"/><path d="M284.4 14 h6.6 a6.6 6.6 0 0 1 -6.6 6.6z" fill="#c8442a"/><rect x="274" y="10" width="8.4" height="8.4" rx="1" fill="#c43e1c"/><text x="278.2" y="16.6" font-family="Liberation Sans" font-weight="700" font-size="6.2" fill="#fff" text-anchor="middle">P</text>
  <!-- blue square arrows -->
  <rect x="345" y="6.8" width="14.4" height="14.4" rx="1" fill="#e8ecfa" stroke="#3a56c8" stroke-width="1.4"/><path d="M349 10 v6 h4 M356 10.5 v6.5 M354.4 15.4 l1.6 1.8 l1.6 -1.8 M348 10 h3" stroke="#3a56c8" stroke-width="1.4" fill="none"/>
  <!-- paint -->
  <ellipse cx="381" cy="15" rx="7" ry="5.4" fill="#e6e0d4" stroke="#9aa" stroke-width=".6"/><circle cx="378" cy="13.4" r="1.2" fill="#e24a3a"/><circle cx="381.4" cy="12.2" r="1.2" fill="#3a8ae2"/><circle cx="378.6" cy="16.8" r="1.2" fill="#4ab04a"/><circle cx="384" cy="16.6" r="1.1" fill="#f0b020"/><path d="M383 18 L390.4 7.4" stroke="#c8862a" stroke-width="1.4"/><path d="M389.4 8.8 l1.6 -2.4" stroke="#3a6ad0" stroke-width="1.6"/>
  <!-- sogou browser -->
  <circle cx="412.2" cy="14" r="8" fill="#2a7ae8"/><circle cx="412.2" cy="14" r="8" fill="none" stroke="#8fc0f8" stroke-width=".8"/><text x="412.200" y="19.200" font-family="'Liberation Sans',sans-serif" font-size="14.500" font-weight="700" font-style="italic" fill="#fff" text-anchor="middle">S</text>
  <!-- chrome -->
  <circle cx="480.6" cy="14" r="7.8" fill="#e34133"/><path d="M480.6 14 L474 10 A7.8 7.8 0 0 0 480.9 21.8z" fill="#2da94f"/><path d="M480.6 14 L480.9 21.8 A7.8 7.8 0 0 0 487.4 10.2z" fill="#fcc31e"/><circle cx="480.6" cy="14" r="3.6" fill="#fff"/><circle cx="480.6" cy="14" r="2.8" fill="#4687f4"/>
  <!-- qq -->
  <ellipse cx="511" cy="15.6" rx="6" ry="5.6" fill="#111"/><ellipse cx="511" cy="11" rx="4.4" ry="4.6" fill="#111"/><ellipse cx="511" cy="17.4" rx="3.4" ry="3.6" fill="#fff"/><ellipse cx="509.6" cy="10.2" rx="1" ry="1.4" fill="#fff"/><ellipse cx="512.4" cy="10.2" rx="1" ry="1.4" fill="#fff"/><ellipse cx="511" cy="13" rx="2.4" ry=".9" fill="#f0a020"/><path d="M506.6 14.4 q4.4 2 8.8 0 l.4 1.6 q-4.8 2 -9.6 0z" fill="#e23a2a"/><ellipse cx="508" cy="21.4" rx="2.4" ry="1" fill="#f0a020"/><ellipse cx="514" cy="21.4" rx="2.4" ry="1" fill="#f0a020"/>
  <!-- wechat -->
  <ellipse cx="536.6" cy="12.2" rx="6" ry="5" fill="#3cc850"/><path d="M533 16 l-1 2.6 l3 -1.6z" fill="#3cc850"/><circle cx="534.4" cy="11" r=".8" fill="#1a7a2a"/><circle cx="538.8" cy="11" r=".8" fill="#1a7a2a"/><ellipse cx="543" cy="16.6" rx="4.6" ry="3.8" fill="#f4f4f4"/><path d="M545.6 19.4 l1 2 l-2.6 -1.2z" fill="#f4f4f4"/><circle cx="541.4" cy="15.8" r=".6" fill="#777"/><circle cx="544.6" cy="15.8" r=".6" fill="#777"/>
  <!-- zhongjin -->
  <rect x="598" y="5.4" width="17.4" height="17.4" rx="1" fill="#7c1414"/><circle cx="606.7" cy="11.6" r="3.2" fill="none" stroke="#fff" stroke-width="1.2"/><circle cx="606.7" cy="11.6" r="1" fill="#fff"/><rect x="601.4" y="17.4" width="10.6" height="2.2" fill="#e8d0d0" opacity=".85"/>
  <!-- youku -->
  <rect x="666" y="5.2" width="17.6" height="17.6" rx="3" fill="#fff"/><path d="M670.4 8.6 l8.4 4 l-8.4 4z" fill="#2a8af8"/><path d="M670.4 12.6 l8.4 0 l-8.4 4z" fill="#f0286a"/><text x="674.8" y="21" font-family="Liberation Sans" font-weight="700" font-size="3.6" fill="#f0286a" text-anchor="middle">YOUKU</text>
  <!-- player -->
  <rect x="696.8" y="5.4" width="16.6" height="17.2" rx="1.4" fill="#f6d820"/><circle cx="705" cy="12" r="3.6" fill="#fff"/><path d="M703.8 10 l3.2 2 l-3.2 2z" fill="#f0a800"/><text x="705" y="20.6" font-family="Liberation Sans" font-weight="700" font-size="3.8" fill="#8a6a00" text-anchor="middle">Player</text>
  <!-- tencent meeting -->
  <rect x="726" y="6" width="15.6" height="15.6" rx="3" fill="#2a78f0"/><path d="M728.4 16.8 l3.4 -5 l2.2 2.6 l2 -3 l3.4 5.4 h-3.4 l-1.8 -2.6 l-1.8 2.6z" fill="#fff"/>
  <!-- groove -->
  <circle cx="800.6" cy="14" r="7.8" fill="#3a2430"/><circle cx="800.6" cy="14" r="7.8" fill="none" stroke="#e8703a" stroke-width="1.4"/><circle cx="800.6" cy="14" r="3" fill="none" stroke="#fff" stroke-width="1.4"/><path d="M803.6 14 v-6.4" stroke="#fff" stroke-width="1.2"/>
  <!-- tray -->
  <path d="M860 16 l4 -4 l4 4" stroke="#222" stroke-width="1.1" fill="none"/>
  <ellipse cx="878.6" cy="12.6" rx="3.8" ry="3.2" fill="#3cc850"/><ellipse cx="882.6" cy="15.4" rx="2.8" ry="2.4" fill="#eaeaea"/>
  <rect x="893.6" y="11" width="10.6" height="6" rx=".6" fill="#222"/><rect x="892.2" y="12.6" width="1.6" height="2.8" fill="#222"/><path d="M895 10 l2 1.4" stroke="#222" stroke-width=".8"/>
  <rect x="913.6" y="8" width="4.2" height="8" rx="2" fill="#222"/><path d="M911.8 13.6 a3.9 3.9 0 0 0 7.8 0 M915.7 17.5 v2.3 M913.6 19.8 h4.2" stroke="#222" stroke-width=".9" fill="none"/>
  <path d="M928 19.6 a8 8 0 0 1 8 -8 M930.4 19.6 a5.6 5.6 0 0 1 5.600 -5.600 M932.800 19.6 a3.2 3.2 0 0 1 3.2 -3.2" stroke="#555" stroke-width="1" fill="none"/><circle cx="935.4" cy="19" r=".9" fill="#555"/>
  <path d="M943.6 12.4 h2 l2.800 -2.600 v8.400 l-2.800 -2.600 h-2z" stroke="#222" stroke-width=".9" fill="none"/><path d="M950.4 11.600 a3.4 3.4 0 0 1 0 4.800 M952.400 9.800 a6 6 0 0 1 0 8.400" stroke="#222" stroke-width=".9" fill="none"/>
  <path d="M966 8.400 v11.200 M963.600 10.800 v6.400 M968.400 10.800 v6.400 M961.400 12.800 v2.400 M970.600 12.800 v2.400" stroke="#a6a6a6" stroke-width="1"/>
  <g transform="rotate(-12 986.8 14)"><rect x="981" y="8.800" width="11.600" height="10.400" rx="2.200" fill="#f0582a"/><text x="986.800" y="18.200" font-family="'Liberation Sans',sans-serif" font-size="11.500" font-weight="700" fill="#fff" text-anchor="middle" transform="translate(986.800 0) scale(1.200 1) translate(-986.800 0)">S</text></g>
  <path d="M1059.500 8.800 h12 v8.600 h-2.400 M1059.500 8.800 v8.600 h5.400" stroke="#222" stroke-width="1" fill="none"/><circle cx="1067.800" cy="18.200" r="1.700" stroke="#222" stroke-width=".9" fill="none"/>
</svg>

</div>
<div class="g" style="left:0;top:647px;width:3.7px;height:67px"></div>
<div class="g" style="left:1086.3px;top:647px;width:3.7px;height:67px"></div>
<div class="g" style="left:0;top:711px;width:68px;height:3px"></div>
<div class="g" style="left:1022px;top:711px;width:68px;height:3px"></div>

<!-- shared scene definition -->
<svg width="0" height="0" style="position:absolute">
  <defs>
    <radialGradient id="bd" cx=".5" cy=".45" r=".75"><stop offset="0" stop-color="#316356"/><stop offset=".6" stop-color="#295246"/><stop offset="1" stop-color="#1a352f"/></radialGradient>
    <linearGradient id="wood" x1="0" y1="0" x2="0" y2="1"><stop offset="0" stop-color="#c8946a"/><stop offset="1" stop-color="#a87048"/></linearGradient>
    <linearGradient id="skin" x1="0" y1="0" x2="1" y2="0"><stop offset="0" stop-color="#e4bca4"/><stop offset=".55" stop-color="#dcae94"/><stop offset="1" stop-color="#b88468"/></linearGradient>
    <linearGradient id="shirt" x1="0" y1="0" x2="0" y2="1"><stop offset="0" stop-color="#c2cee8"/><stop offset="1" stop-color="#a8b6d6"/></linearGradient>
    <filter id="soft" x="-5%" y="-5%" width="110%" height="110%"><feGaussianBlur stdDeviation=".95"/></filter>
    
  </defs>
</svg>
<!-- top-right video -->
<svg class="a" style="left:880px;top:12px" width="198" height="111" viewBox="0 0 198 111" preserveAspectRatio="none">
      <rect width="198" height="111" fill="url(#wood)"/>
      <rect x="3.300" y="3.300" width="191.400" height="104.400" fill="url(#bd)"/>
      <g filter="url(#soft)">
        <!-- books -->
        <rect x="158" y="107" width="36" height="3" fill="#c8a070"/>
        <path d="M158 106 L164 80 L167.500 80.500 L162 107z" fill="#b08850"/>
        <rect x="166" y="75.0" width="4.200" height="32.5" fill="#e4e2d8"/>
        <rect x="170.200" y="81.0" width="4.600" height="26.5" fill="#7a7078"/>
        <rect x="174.800" y="84.0" width="2.400" height="23.5" fill="#c02838"/>
        <rect x="177.200" y="82.0" width="2.600" height="25.5" fill="#8a8a58"/>
        <rect x="179.800" y="81.0" width="3.400" height="26.5" fill="#3a78d0"/>
        <rect x="183.200" y="80.0" width="5.400" height="27.5" fill="#e0a830"/>
        <rect x="188.800" y="84.0" width="5.200" height="23.5" fill="#5a5a5e"/>
        <!-- shirt -->
        <path d="M36 111 Q44 90 62 85 L86 78 L118 78 L146 87 Q156 92 160 111z" fill="url(#shirt)"/>
        <path d="M84 80 L94 96 L100 88 L112 104 L120 80z" fill="#d0daf0"/>
        <path d="M70 88 v23 M80 86 v25 M128 86 v25 M140 90 v21" stroke="#8c9abc" stroke-width=".8" opacity=".6"/>
        <!-- neck -->
        <path d="M88 66 L88 80 Q100 90 114 80 L114 62z" fill="#c4947a"/>
        <!-- ear -->
        <ellipse cx="119.600" cy="58" rx="3" ry="6" fill="#d0a088"/>
        <!-- face -->
        <path d="M82 44 Q81 30 96 27 Q116 26 118.500 46 Q119 62 112 70 Q104 77 94 75 Q84 70 82.500 58z" fill="url(#skin)"/>
        <!-- hair -->
        <path d="M83 44 Q82 28 98 22.500 Q118 20 122.500 36 Q124 46 119.500 54 Q119 40 112 34 Q100 28 88 33 Q84 37 83 44z" fill="#2a2422"/>
        <!-- brows, glasses, mouth -->
        <path d="M84 46 h10 M100 46.500 h11" stroke="#4a3428" stroke-width="1.400" opacity=".7"/>
        <path d="M82 49.500 Q88 47.500 95 49.500 Q95 55 88.500 55 Q83 54.500 82 49.500z M99 49.500 Q106 47.500 113 50 Q113 55.500 106 55.500 Q99.500 55 99 49.500z" fill="#e8d0c0" fill-opacity=".35" stroke="#6a5a58" stroke-width=".9"/>
        <path d="M95 50 h4 M113 50.500 L120 52" stroke="#6a5a58" stroke-width=".9"/>
        <path d="M88 52 h3.500 M104 52.300 h3.500" stroke="#3a2820" stroke-width="1.200"/>
        <path d="M93 55 Q91.500 60 94.500 60.500" stroke="#a87458" stroke-width="1" fill="none"/>
        <path d="M86 64.500 Q92 65.600 99 64.800" stroke="#9a4a48" stroke-width="1.800" fill="none"/>
      </g>
    </svg>
<div class="a" style="left:880px;top:97.500px;width:104px;height:25.500px;background:rgba(40,40,40,.62)"></div>
<svg class="a blur" style="left:884px;top:101px" width="16" height="18" viewBox="0 0 16 18"><rect x="5" y="1.500" width="5.600" height="9.500" rx="2.800" fill="#fff"/><path d="M2.600 8.500 a5.200 5.200 0 0 0 10.400 0 M7.800 13.700 v2.300 M5 16.200 h5.600" stroke="#fff" stroke-width="1.300" fill="none"/></svg>
<div class="a blur" style="left:903px;top:101px;font-size:14px;line-height:18px;color:#fff;white-space:nowrap">张彩江~华工</div>
<div class="a" style="left:1082px;top:2px;width:6px;height:6px;border-radius:3px;background:#e8850c"></div>

<!-- speaker floating panel -->
<div class="a" style="left:858px;top:364.600px;width:225px;height:176.400px;background:#161616"></div>
<div class="a" style="left:860.400px;top:391.800px;width:220.700px;height:149.200px;background:#33302e"></div>
<div class="a" style="left:858px;top:364.600px;width:225px;height:25.600px;background:#3a3d42"></div>
<div class="a" style="left:877.500px;top:368px;width:1px;height:18px;background:#2a2c30"></div>
<svg class="a blur" style="left:864px;top:369px" width="14" height="16" viewBox="0 0 14 16"><rect x="4.600" y="1.500" width="4.400" height="7.500" rx="2.200" fill="#8e9196"/><path d="M2.800 7 a4 4 0 0 0 8 0 M6.800 11 v2 M4.600 13.200 h4.400" stroke="#8e9196" stroke-width="1" fill="none"/></svg>
<div class="a blur" style="left:888.800px;top:371.500px;font-size:8.800px;line-height:11px;color:#fff;white-space:nowrap">正在讲话:</div>
<svg class="a blur" style="left:1031px;top:367px" width="30" height="20" viewBox="0 0 30 20"><path d="M1.500 15 l7 -11.500 l4 5 l4.500 -6.500 l8.500 13 h-7 l-3.500 -5 l-3.500 5z" fill="#5d6066"/><path d="M9 15 l3.500 -5 l3.500 5z" fill="#4a4d52"/></svg>
<svg class="a" style="left:860.500px;top:404.200px;transform:scaleX(-1)" width="220.500" height="123.400" viewBox="0 0 198 111" preserveAspectRatio="none">
      <rect width="198" height="111" fill="url(#wood)"/>
      <rect x="3.300" y="3.300" width="191.400" height="104.400" fill="url(#bd)"/>
      <g filter="url(#soft)">
        <!-- books -->
        <rect x="158" y="107" width="36" height="3" fill="#c8a070"/>
        <path d="M158 106 L164 80 L167.500 80.500 L162 107z" fill="#b08850"/>
        <rect x="166" y="75.0" width="4.200" height="32.5" fill="#e4e2d8"/>
        <rect x="170.200" y="81.0" width="4.600" height="26.5" fill="#7a7078"/>
        <rect x="174.800" y="84.0" width="2.400" height="23.5" fill="#c02838"/>
        <rect x="177.200" y="82.0" width="2.600" height="25.5" fill="#8a8a58"/>
        <rect x="179.800" y="81.0" width="3.400" height="26.5" fill="#3a78d0"/>
        <rect x="183.200" y="80.0" width="5.400" height="27.5" fill="#e0a830"/>
        <rect x="188.800" y="84.0" width="5.200" height="23.5" fill="#5a5a5e"/>
        <!-- shirt -->
        <path d="M36 111 Q44 90 62 85 L86 78 L118 78 L146 87 Q156 92 160 111z" fill="url(#shirt)"/>
        <path d="M84 80 L94 96 L100 88 L112 104 L120 80z" fill="#d0daf0"/>
        <path d="M70 88 v23 M80 86 v25 M128 86 v25 M140 90 v21" stroke="#8c9abc" stroke-width=".8" opacity=".6"/>
        <!-- neck -->
        <path d="M88 66 L88 80 Q100 90 114 80 L114 62z" fill="#c4947a"/>
        <!-- ear -->
        <ellipse cx="119.600" cy="58" rx="3" ry="6" fill="#d0a088"/>
        <!-- face -->
        <path d="M82 44 Q81 30 96 27 Q116 26 118.500 46 Q119 62 112 70 Q104 77 94 75 Q84 70 82.500 58z" fill="url(#skin)"/>
        <!-- hair -->
        <path d="M83 44 Q82 28 98 22.500 Q118 20 122.500 36 Q124 46 119.500 54 Q119 40 112 34 Q100 28 88 33 Q84 37 83 44z" fill="#2a2422"/>
        <!-- brows, glasses, mouth -->
        <path d="M84 46 h10 M100 46.500 h11" stroke="#4a3428" stroke-width="1.400" opacity=".7"/>
        <path d="M82 49.500 Q88 47.500 95 49.500 Q95 55 88.500 55 Q83 54.500 82 49.500z M99 49.500 Q106 47.500 113 50 Q113 55.500 106 55.500 Q99.500 55 99 49.500z" fill="#e8d0c0" fill-opacity=".35" stroke="#6a5a58" stroke-width=".9"/>
        <path d="M95 50 h4 M113 50.500 L120 52" stroke="#6a5a58" stroke-width=".9"/>
        <path d="M88 52 h3.500 M104 52.300 h3.500" stroke="#3a2820" stroke-width="1.200"/>
        <path d="M93 55 Q91.500 60 94.500 60.500" stroke="#a87458" stroke-width="1" fill="none"/>
        <path d="M86 64.500 Q92 65.600 99 64.800" stroke="#9a4a48" stroke-width="1.800" fill="none"/>
      </g>
    </svg>
<!-- chalk on ledge (right side after mirroring) -->
<svg class="a blur" style="left:1030px;top:516px" width="40" height="10" viewBox="0 0 40 10"><path d="M2 4.500 h10" stroke="#3aa0d8" stroke-width="1.600"/><path d="M18 6 l11 -3 M26 7 l10 -.5" stroke="#eee" stroke-width="1.400"/></svg>
<div class="a" style="left:858px;top:523px;width:82px;height:18px;background:rgba(30,30,30,.72)"></div>
<svg class="a blur" style="left:860px;top:524px" width="13" height="15" viewBox="0 0 13 15"><rect x="4" y="1" width="4.600" height="7.600" rx="2.300" fill="#fff"/><path d="M2 6.800 a4.300 4.300 0 0 0 8.600 0 M6.300 11.100 v2 M4 13.300 h4.600" stroke="#fff" stroke-width="1.100" fill="none"/></svg>
<div class="a blur" style="left:872.600px;top:524px;font-size:11.800px;line-height:15px;color:#fff;white-space:nowrap">张彩江~华工</div>
<svg class="a" style="left:858px;top:530px" width="225" height="11" viewBox="0 0 225 11"><path d="M1 4 l7 7 M1 7 l4 4 M1 1 l10 10" stroke="#aaa" stroke-width=".7"/><path d="M224 4 l-7 7 M224 7 l-4 4 M224 1 l-10 10" stroke="#aaa" stroke-width=".7"/></svg>

<!-- mute button -->
<div class="a" style="left:958px;top:731.500px;width:48px;height:48px;border-radius:24px;background:#2d3034"></div>
<svg class="a blur" style="left:958px;top:731.500px" width="48" height="48" viewBox="0 0 48 48"><rect x="18.800" y="10.400" width="10.200" height="18.800" rx="5.100" fill="#fff"/><path d="M15.600 23.500 a8.400 8.400 0 0 0 16.800 0" stroke="#fff" stroke-width="1.700" fill="none"/><path d="M24 32 v5" stroke="#fff" stroke-width="1.700"/><path d="M18 37.300 h12" stroke="#fff" stroke-width="1.900"/><path d="M13.200 35.200 L34.600 13.400" stroke="#2d3034" stroke-width="4"/><path d="M13.200 35.200 L34.600 13.400" stroke="#e8503a" stroke-width="1.800" stroke-linecap="round"/></svg>
<!-- bottom-left sharer label -->
<svg class="a blur" style="left:0;top:796px" width="32" height="16" viewBox="0 0 32 16"><rect x="0" y="1" width="14" height="10" rx="1.200" fill="#fff"/><path d="M4.400 8.400 q.4 -3.600 4.400 -3.800 v-1.600 l3 2.600 l-3 2.600 v-1.600 q-2.800 -.2 -4.400 1.800z" fill="#000"/><path d="M3.600 13.400 h7" stroke="#fff" stroke-width="1.500"/><path d="M7 11 v2" stroke="#fff" stroke-width="1.500"/><rect x="22.400" y="1.600" width="5" height="8.400" rx="2.500" fill="#fff"/><path d="M20.200 7.600 a4.700 4.700 0 0 0 9.400 0 M24.900 12.300 v2.300" stroke="#fff" stroke-width="1.200" fill="none"/></svg>
<div class="a blur" style="left:37.400px;top:795.500px;font-size:14px;line-height:18px;color:#e8e8e8;white-space:nowrap">张彩江~华工的屏幕共享</div>
<div class="a" style="left:0;top:816.500px;width:1090px;height:1.500px;background:#a8a8a8"></div>


</body>
</html>
